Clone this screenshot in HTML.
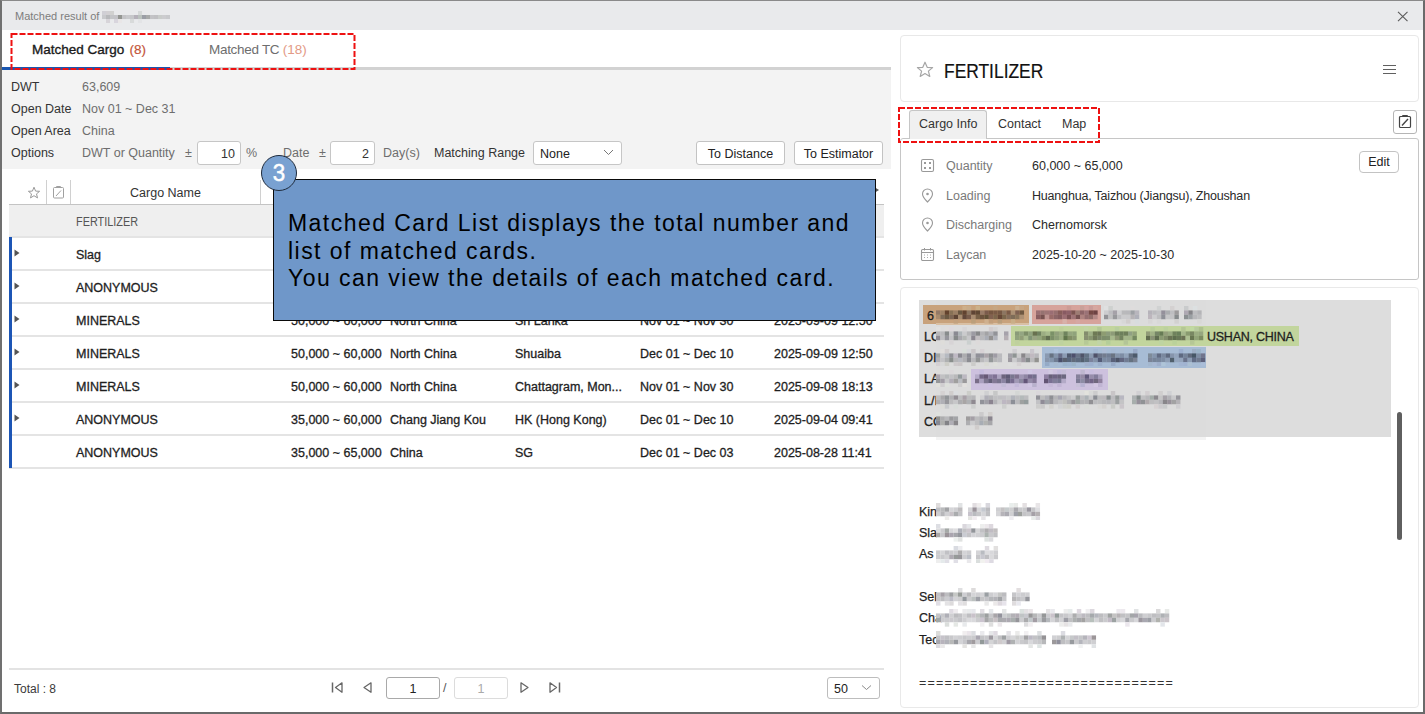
<!DOCTYPE html><html><head><meta charset="utf-8"><style>
*{box-sizing:border-box;margin:0;padding:0}
html,body{width:1425px;height:714px;overflow:hidden;background:#fff;font-family:"Liberation Sans",sans-serif;}
.a{position:absolute}
.t{position:absolute;white-space:nowrap;line-height:1}
.sb{-webkit-text-stroke:0.35px currentColor}
.inp{position:absolute;background:#fff;border:1px solid #c6c6c6;border-radius:3px}
.btn{position:absolute;background:#fff;border:1px solid #c3c3c3;border-radius:3px}
.rl{position:absolute;left:9px;width:875px;height:2px;margin-top:-1px;background:#e4e4e4}
.cell{position:absolute;white-space:nowrap;line-height:1;font-size:12.5px;color:#1e1e1e;-webkit-text-stroke:0.3px #1e1e1e}
.lab{position:absolute;white-space:nowrap;line-height:1;font-size:12.5px;color:#7a7a7a}
.val{position:absolute;white-space:nowrap;line-height:1;font-size:12.5px;color:#2a2a2a}
.em{position:absolute;white-space:nowrap;line-height:1;font-size:12.5px;color:#1e1e1e}
</style></head><body>
<div class="a" style="left:0;top:0;width:1425px;height:30px;background:#e9eaec"></div>
<div class="t" style="left:15px;top:11px;font-size:11px;color:#7d7d7d">Matched result of</div>
<svg class="a" style="left:102px;top:11.00px" width="68" height="12.0"><rect x="0.0" y="0.0" width="4.05" height="4.05" fill="rgb(208, 207, 213)"/><rect x="0.0" y="4.0" width="4.05" height="4.05" fill="rgb(200, 201, 204)"/><rect x="4.0" y="0.0" width="4.05" height="4.05" fill="rgb(210, 208, 211)"/><rect x="4.0" y="4.0" width="4.05" height="4.05" fill="rgb(184, 185, 188)"/><rect x="4.0" y="8.0" width="4.05" height="4.05" fill="rgb(215, 212, 217)"/><rect x="8.0" y="0.0" width="4.05" height="4.05" fill="rgb(209, 209, 208)"/><rect x="8.0" y="4.0" width="4.05" height="4.05" fill="rgb(196, 197, 200)"/><rect x="12.0" y="4.0" width="4.05" height="4.05" fill="rgb(196, 196, 200)"/><rect x="12.0" y="8.0" width="4.05" height="4.05" fill="rgb(216, 213, 221)"/><rect x="16.0" y="4.0" width="4.05" height="4.05" fill="rgb(148, 150, 146)"/><rect x="16.0" y="8.0" width="4.05" height="4.05" fill="rgb(233, 230, 231)"/><rect x="20.0" y="4.0" width="4.05" height="4.05" fill="rgb(196, 196, 199)"/><rect x="24.0" y="4.0" width="4.05" height="4.05" fill="rgb(201, 202, 205)"/><rect x="28.0" y="4.0" width="4.05" height="4.05" fill="rgb(198, 199, 202)"/><rect x="28.0" y="8.0" width="4.05" height="4.05" fill="rgb(216, 218, 218)"/><rect x="32.0" y="4.0" width="4.05" height="4.05" fill="rgb(181, 177, 186)"/><rect x="36.0" y="0.0" width="4.05" height="4.05" fill="rgb(213, 216, 216)"/><rect x="36.0" y="4.0" width="4.05" height="4.05" fill="rgb(187, 194, 190)"/><rect x="36.0" y="8.0" width="4.05" height="4.05" fill="rgb(227, 228, 230)"/><rect x="40.0" y="4.0" width="4.05" height="4.05" fill="rgb(155, 158, 166)"/><rect x="44.0" y="4.0" width="4.05" height="4.05" fill="rgb(168, 170, 170)"/><rect x="48.0" y="4.0" width="4.05" height="4.05" fill="rgb(195, 195, 198)"/><rect x="52.0" y="4.0" width="4.05" height="4.05" fill="rgb(192, 192, 195)"/><rect x="56.0" y="4.0" width="4.05" height="4.05" fill="rgb(201, 204, 202)"/><rect x="60.0" y="4.0" width="4.05" height="4.05" fill="rgb(204, 204, 207)"/><rect x="64.0" y="4.0" width="4.05" height="4.05" fill="rgb(200, 201, 204)"/></svg>
<svg class="a" style="left:1397px;top:11px" width="12" height="11" viewBox="0 0 12 11"><path d="M1 0.8L10.5 10.2M10.5 0.8L1 10.2" stroke="#5a5a5a" stroke-width="1.1" fill="none"/></svg>
<div class="a" style="left:2px;top:67px;width:889px;height:3px;background:#d2d2d2"></div>
<div class="a" style="left:2px;top:67px;width:168px;height:3px;background:#1a56b0"></div>
<div class="t sb" style="left:32px;top:43px;font-size:13.5px;color:#1a1a1a">Matched Cargo <span style="color:#c4553a;-webkit-text-stroke:0.2px #c4553a;margin-left:1.5px">(8)</span></div>
<div class="t" style="left:209px;top:43px;font-size:13.5px;color:#6e6e6e;letter-spacing:-0.3px">Matched TC <span style="color:#e39a86;letter-spacing:0">(18)</span></div>
<div class="a" style="left:2px;top:70px;width:889px;height:99px;background:#f3f3f3"></div>
<div class="t" style="left:11px;top:81px;font-size:12.5px;color:#333">DWT</div>
<div class="t" style="left:82px;top:81px;font-size:12.5px;color:#6e6e6e">63,609</div>
<div class="t" style="left:11px;top:103px;font-size:12.5px;color:#333">Open Date</div>
<div class="t" style="left:82px;top:103px;font-size:12.5px;color:#6e6e6e">Nov 01 ~ Dec 31</div>
<div class="t" style="left:11px;top:125px;font-size:12.5px;color:#333">Open Area</div>
<div class="t" style="left:82px;top:125px;font-size:12.5px;color:#6e6e6e">China</div>
<div class="t" style="left:11px;top:147px;font-size:12.5px;color:#333">Options</div>
<div class="t" style="left:82px;top:147px;font-size:12.5px;color:#6e6e6e">DWT or Quantity</div>
<div class="t" style="left:185px;top:147px;font-size:12.5px;color:#6e6e6e">±</div>
<div class="inp" style="left:197px;top:141px;width:44px;height:24px"></div>
<div class="t" style="left:197px;top:148px;width:38px;text-align:right;font-size:12.5px;color:#333">10</div>
<div class="t" style="left:246px;top:147px;font-size:12.5px;color:#6e6e6e">%</div>
<div class="t" style="left:283px;top:147px;font-size:12.5px;color:#6e6e6e">Date</div>
<div class="t" style="left:319px;top:147px;font-size:12.5px;color:#6e6e6e">±</div>
<div class="inp" style="left:330px;top:141px;width:45px;height:24px"></div>
<div class="t" style="left:330px;top:148px;width:39px;text-align:right;font-size:12.5px;color:#333">2</div>
<div class="t" style="left:383px;top:147px;font-size:12.5px;color:#6e6e6e">Day(s)</div>
<div class="t" style="left:434px;top:147px;font-size:12.5px;color:#333">Matching Range</div>
<div class="inp" style="left:533px;top:141px;width:89px;height:24px"></div>
<div class="t" style="left:540px;top:148px;font-size:12.5px;color:#222">None</div>
<svg class="a" style="left:603px;top:148px" width="11" height="8" viewBox="0 0 11 8"><path d="M1 2L5.5 6.5L10 2" stroke="#777" stroke-width="1" fill="none"/></svg>
<div class="btn" style="left:696px;top:141px;width:89px;height:24px"></div>
<div class="t" style="left:696px;top:148px;width:89px;text-align:center;font-size:12.5px;color:#222">To Distance</div>
<div class="btn" style="left:794px;top:141px;width:89px;height:24px"></div>
<div class="t" style="left:794px;top:148px;width:89px;text-align:center;font-size:12.5px;color:#222">To Estimator</div>
<div class="a" style="left:46px;top:180px;width:1px;height:24px;background:#d0d0d0"></div>
<div class="a" style="left:70px;top:180px;width:1px;height:24px;background:#d0d0d0"></div>
<div class="a" style="left:260px;top:180px;width:1px;height:24px;background:#d0d0d0"></div>
<div class="a" style="left:9px;top:204px;width:875px;height:1px;background:#c4c4c4"></div>
<svg class="a" style="left:27px;top:186px" width="14" height="14" viewBox="0 0 14 14"><path d="M7 1.2L8.6 5.1L12.6 5.3L9.5 7.9L10.5 11.9L7 9.7L3.5 11.9L4.5 7.9L1.4 5.3L5.4 5.1Z" stroke="#9a9a9a" stroke-width="1" fill="none" stroke-linejoin="round"/></svg>
<svg class="a" style="left:52px;top:185px" width="13" height="14" viewBox="0 0 13 14"><rect x="1.5" y="2.5" width="10" height="10.5" rx="1" stroke="#a0a0a0" stroke-width="1" fill="none"/><path d="M4.5 2.5V1.5H8.5V2.5" stroke="#a0a0a0" fill="none"/><path d="M4 11L9 5.5" stroke="#a0a0a0" stroke-width="1"/></svg>
<div class="t" style="left:71px;top:187px;width:189px;text-align:center;font-size:12.5px;color:#333">Cargo Name</div>
<div class="a" style="left:9px;top:205px;width:875px;height:32px;background:#efefef"></div>
<div class="t" style="left:76px;top:216px;font-size:12.5px;color:#555;transform:scaleX(0.87);transform-origin:0 0">FERTILIZER</div>
<div class="rl" style="top:237px"></div>
<svg class="a" style="left:14px;top:249px" width="6" height="8" viewBox="0 0 6 8"><path d="M0.5 0.5L5.5 4L0.5 7.5Z" fill="#555"/></svg>
<div class="cell" style="left:76px;top:249px">Slag</div>
<div class="rl" style="top:270px"></div>
<svg class="a" style="left:14px;top:282px" width="6" height="8" viewBox="0 0 6 8"><path d="M0.5 0.5L5.5 4L0.5 7.5Z" fill="#555"/></svg>
<div class="cell" style="left:76px;top:282px">ANONYMOUS</div>
<div class="rl" style="top:303px"></div>
<svg class="a" style="left:14px;top:315px" width="6" height="8" viewBox="0 0 6 8"><path d="M0.5 0.5L5.5 4L0.5 7.5Z" fill="#555"/></svg>
<div class="cell" style="left:76px;top:315px">MINERALS</div>
<div class="cell" style="left:291px;top:315px">50,000 ~ 60,000</div>
<div class="cell" style="left:390px;top:315px">North China</div>
<div class="cell" style="left:515px;top:315px">Sri Lanka</div>
<div class="cell" style="left:640px;top:315px">Nov 01 ~ Nov 30</div>
<div class="cell" style="left:774px;top:315px">2025-09-09 12:50</div>
<div class="rl" style="top:336px"></div>
<svg class="a" style="left:14px;top:348px" width="6" height="8" viewBox="0 0 6 8"><path d="M0.5 0.5L5.5 4L0.5 7.5Z" fill="#555"/></svg>
<div class="cell" style="left:76px;top:348px">MINERALS</div>
<div class="cell" style="left:291px;top:348px">50,000 ~ 60,000</div>
<div class="cell" style="left:390px;top:348px">North China</div>
<div class="cell" style="left:515px;top:348px">Shuaiba</div>
<div class="cell" style="left:640px;top:348px">Dec 01 ~ Dec 10</div>
<div class="cell" style="left:774px;top:348px">2025-09-09 12:50</div>
<div class="rl" style="top:369px"></div>
<svg class="a" style="left:14px;top:381px" width="6" height="8" viewBox="0 0 6 8"><path d="M0.5 0.5L5.5 4L0.5 7.5Z" fill="#555"/></svg>
<div class="cell" style="left:76px;top:381px">MINERALS</div>
<div class="cell" style="left:291px;top:381px">50,000 ~ 60,000</div>
<div class="cell" style="left:390px;top:381px">North China</div>
<div class="cell" style="left:515px;top:381px">Chattagram, Mon...</div>
<div class="cell" style="left:640px;top:381px">Nov 01 ~ Nov 30</div>
<div class="cell" style="left:774px;top:381px">2025-09-08 18:13</div>
<div class="rl" style="top:402px"></div>
<svg class="a" style="left:14px;top:414px" width="6" height="8" viewBox="0 0 6 8"><path d="M0.5 0.5L5.5 4L0.5 7.5Z" fill="#555"/></svg>
<div class="cell" style="left:76px;top:414px">ANONYMOUS</div>
<div class="cell" style="left:291px;top:414px">35,000 ~ 60,000</div>
<div class="cell" style="left:390px;top:414px">Chang Jiang Kou</div>
<div class="cell" style="left:515px;top:414px">HK (Hong Kong)</div>
<div class="cell" style="left:640px;top:414px">Dec 01 ~ Dec 10</div>
<div class="cell" style="left:774px;top:414px">2025-09-04 09:41</div>
<div class="rl" style="top:435px"></div>
<div class="cell" style="left:76px;top:447px">ANONYMOUS</div>
<div class="cell" style="left:291px;top:447px">35,000 ~ 65,000</div>
<div class="cell" style="left:390px;top:447px">China</div>
<div class="cell" style="left:515px;top:447px">SG</div>
<div class="cell" style="left:640px;top:447px">Dec 01 ~ Dec 03</div>
<div class="cell" style="left:774px;top:447px">2025-08-28 11:41</div>
<div class="rl" style="top:468px"></div>
<div class="a" style="left:9px;top:237px;width:3px;height:231px;background:#1c55b5"></div>
<div class="a" style="left:9px;top:668px;width:875px;height:2px;background:#e3e3e3"></div>
<div class="t" style="left:14px;top:683px;font-size:12px;color:#3a3a3a">Total : 8</div>
<svg class="a" style="left:330px;top:681px" width="14" height="13" viewBox="0 0 14 13"><path d="M2.5 1.5V11.5" stroke="#666" stroke-width="1.5"/><path d="M12 1.8L5.5 6.5L12 11.2Z" stroke="#666" stroke-width="1.3" fill="none" stroke-linejoin="round"/></svg>
<svg class="a" style="left:361px;top:681px" width="12" height="13" viewBox="0 0 12 13"><path d="M10 1.8L3 6.5L10 11.2Z" stroke="#666" stroke-width="1.3" fill="none" stroke-linejoin="round"/></svg>
<div class="inp" style="left:386px;top:677px;width:54px;height:22px;border-color:#a9a9a9"></div>
<div class="t" style="left:386px;top:683px;width:54px;text-align:center;font-size:12.5px;color:#222">1</div>
<div class="t" style="left:443px;top:682px;font-size:12.5px;color:#555">/</div>
<div class="inp" style="left:454px;top:677px;width:54px;height:22px;border-color:#dcdcdc"></div>
<div class="t" style="left:454px;top:683px;width:54px;text-align:center;font-size:12.5px;color:#aaa">1</div>
<svg class="a" style="left:519px;top:681px" width="12" height="13" viewBox="0 0 12 13"><path d="M2 1.8L9 6.5L2 11.2Z" stroke="#666" stroke-width="1.3" fill="none" stroke-linejoin="round"/></svg>
<svg class="a" style="left:548px;top:681px" width="14" height="13" viewBox="0 0 14 13"><path d="M11.5 1.5V11.5" stroke="#666" stroke-width="1.5"/><path d="M2 1.8L8.5 6.5L2 11.2Z" stroke="#666" stroke-width="1.3" fill="none" stroke-linejoin="round"/></svg>
<div class="inp" style="left:827px;top:677px;width:53px;height:22px;border-color:#bdbdbd"></div>
<div class="t" style="left:834px;top:683px;font-size:12.5px;color:#222">50</div>
<svg class="a" style="left:861px;top:684px" width="11" height="7" viewBox="0 0 11 7"><path d="M1 1.5L5.5 5.5L10 1.5" stroke="#8a8a8a" stroke-width="1" fill="none"/></svg>
<div class="a" style="left:900px;top:35px;width:519px;height:67px;border:1px solid #e8e8e8;border-radius:4px;background:#fff"></div>
<svg class="a" style="left:916px;top:61px" width="18" height="17" viewBox="0 0 18 17"><path d="M9 1.2L11.2 6.3L16.6 6.6L12.4 10.1L13.8 15.4L9 12.5L4.2 15.4L5.6 10.1L1.4 6.6L6.8 6.3Z" stroke="#a6a6a6" stroke-width="1.2" fill="none" stroke-linejoin="round"/></svg>
<div class="t" style="left:944px;top:61px;font-size:20px;color:#111;transform:scaleX(0.87);transform-origin:0 0;-webkit-text-stroke:0.2px #111">FERTILIZER</div>
<div class="a" style="left:1383px;top:65.2px;width:13px;height:1.3px;background:#606060"></div>
<div class="a" style="left:1383px;top:69.2px;width:13px;height:1.3px;background:#606060"></div>
<div class="a" style="left:1383px;top:73.2px;width:13px;height:1.3px;background:#606060"></div>
<div class="a" style="left:900px;top:138px;width:519px;height:142px;border:1px solid #c6c6c6;border-radius:3px;background:#fff"></div>
<div class="a" style="left:909px;top:110px;width:78px;height:29px;background:#f0f0f0;border:1px solid #c6c6c6;border-bottom:none;border-radius:3px 3px 0 0"></div>
<div class="t" style="left:919px;top:118px;font-size:12.5px;color:#333">Cargo Info</div>
<div class="t" style="left:998px;top:118px;font-size:12.5px;color:#333">Contact</div>
<div class="t" style="left:1062px;top:118px;font-size:12.5px;color:#333">Map</div>
<div class="btn" style="left:1393px;top:110px;width:24px;height:24px;border-color:#b5b5b5"></div>
<svg class="a" style="left:1398px;top:114px" width="14" height="15" viewBox="0 0 14 15"><rect x="1.5" y="2.5" width="11" height="11" rx="1" stroke="#444" stroke-width="1.2" fill="none"/><path d="M4.5 2.5V1.5H9.5V2.5" stroke="#444" fill="none"/><path d="M4 11.5L10 5" stroke="#444" stroke-width="1.4"/></svg>
<div class="btn" style="left:1359px;top:151px;width:40px;height:22px;border-color:#c3c3c3;border-radius:4px"></div>
<div class="t" style="left:1359px;top:156px;width:40px;text-align:center;font-size:12.5px;color:#222">Edit</div>
<div class="lab" style="left:946px;top:160px">Quantity</div>
<div class="val" style="left:1032px;top:160px">60,000 ~ 65,000</div>
<svg class="a" style="left:920px;top:158px" width="15" height="15" viewBox="0 0 15 15"><rect x="1.5" y="1.5" width="12" height="12" rx="1.5" stroke="#999" stroke-width="1.1" fill="none"/><rect x="4" y="4" width="2" height="2" fill="#999"/><rect x="9" y="4" width="2" height="2" fill="#999"/><rect x="4" y="9" width="2" height="2" fill="#999"/><rect x="9" y="9" width="2" height="2" fill="#999"/></svg>
<div class="lab" style="left:946px;top:190px">Loading</div>
<div class="val" style="left:1032px;top:190px;letter-spacing:-0.19px">Huanghua, Taizhou (Jiangsu), Zhoushan</div>
<svg class="a" style="left:920px;top:188px" width="15" height="15" viewBox="0 0 15 15"><path d="M7.5 14C7.5 14 2.5 9 2.5 6A5 5 0 0 1 12.5 6C12.5 9 7.5 14 7.5 14Z" stroke="#999" stroke-width="1.1" fill="none"/><circle cx="7.5" cy="6" r="1.3" fill="#999"/></svg>
<div class="lab" style="left:946px;top:219px">Discharging</div>
<div class="val" style="left:1032px;top:219px">Chernomorsk</div>
<svg class="a" style="left:920px;top:217px" width="15" height="15" viewBox="0 0 15 15"><path d="M7.5 14C7.5 14 2.5 9 2.5 6A5 5 0 0 1 12.5 6C12.5 9 7.5 14 7.5 14Z" stroke="#999" stroke-width="1.1" fill="none"/><circle cx="7.5" cy="6" r="1.3" fill="#999"/></svg>
<div class="lab" style="left:946px;top:249px">Laycan</div>
<div class="val" style="left:1032px;top:249px">2025-10-20 ~ 2025-10-30</div>
<svg class="a" style="left:920px;top:247px" width="15" height="15" viewBox="0 0 15 15"><rect x="1.5" y="2.5" width="12" height="11" rx="1.2" stroke="#999" stroke-width="1.1" fill="none"/><path d="M1.5 5.5H13.5" stroke="#999"/><path d="M4.5 1V3.5M10.5 1V3.5" stroke="#999"/><path d="M4 8h1M7 8h1M10 8h1M4 10.5h1M7 10.5h1M10 10.5h1" stroke="#aaa"/></svg>
<div class="a" style="left:900px;top:287px;width:519px;height:421px;border:1px solid #e9e9e9;border-radius:4px;background:#fff"></div>
<div class="a" style="left:919px;top:300px;width:472px;height:137px;background:#dddddd"></div>
<div class="a" style="left:923px;top:305px;width:106px;height:19px;background:#c8a27c"></div>
<div class="a" style="left:1032px;top:305px;width:69px;height:19px;background:#d6a39b"></div>
<div class="a" style="left:1011px;top:326px;width:288px;height:20px;background:#c2d59d"></div>
<div class="a" style="left:1042px;top:347px;width:164px;height:21px;background:#a7bcd5"></div>
<div class="a" style="left:971px;top:369px;width:137px;height:21px;background:#cdc1de"></div>
<div class="em" style="left:927px;top:309.8px;-webkit-text-stroke:0.3px #1e1e1e">6</div>
<div class="em" style="left:924px;top:331.0px;-webkit-text-stroke:0.3px #1e1e1e">LO</div>
<div class="em" style="left:924px;top:352.2px;-webkit-text-stroke:0.3px #1e1e1e">DI</div>
<div class="em" style="left:924px;top:373.4px;-webkit-text-stroke:0.3px #1e1e1e">LA</div>
<div class="em" style="left:924px;top:394.6px;-webkit-text-stroke:0.3px #1e1e1e">L/I</div>
<div class="em" style="left:924px;top:415.8px;-webkit-text-stroke:0.3px #1e1e1e">CO</div>
<div class="a" style="left:936px;top:300px;width:270px;height:137px;background:#dcdcdc"></div>
<div class="a" style="left:936px;top:437px;width:270px;height:3px;background:#f3f3f3"></div>
<div class="a" style="left:936px;top:305px;width:93px;height:19px;background:#c8a27c"></div>
<div class="a" style="left:936px;top:323px;width:93px;height:2px;background:#d9c0a4"></div>
<div class="a" style="left:1032px;top:305px;width:69px;height:19px;background:#d6a39b"></div>
<div class="a" style="left:1011px;top:326px;width:195px;height:20px;background:#c2d59d"></div>
<div class="a" style="left:1042px;top:347px;width:164px;height:21px;background:#a7bcd5"></div>
<div class="a" style="left:971px;top:369px;width:137px;height:21px;background:#cdc1de"></div>
<div class="em" style="left:1207px;top:331.0px;-webkit-text-stroke:0.3px #1e1e1e;letter-spacing:-0.25px">USHAN, CHINA</div>
<svg class="a" style="left:936px;top:306.20px" width="92" height="17.6"><rect x="0.0" y="4.4" width="4.45" height="4.45" fill="rgb(147, 122, 103)"/><rect x="0.0" y="8.8" width="4.45" height="4.45" fill="rgb(167, 139, 110)"/><rect x="4.4" y="4.4" width="4.45" height="4.45" fill="rgb(157, 129, 101)"/><rect x="4.4" y="8.8" width="4.45" height="4.45" fill="rgb(125, 106, 87)"/><rect x="8.8" y="4.4" width="4.45" height="4.45" fill="rgb(99, 67, 46)"/><rect x="8.8" y="8.8" width="4.45" height="4.45" fill="rgb(106, 88, 66)"/><rect x="13.2" y="4.4" width="4.45" height="4.45" fill="rgb(135, 113, 86)"/><rect x="13.2" y="8.8" width="4.45" height="4.45" fill="rgb(124, 101, 83)"/><rect x="17.6" y="4.4" width="4.45" height="4.45" fill="rgb(154, 127, 101)"/><rect x="17.6" y="8.8" width="4.45" height="4.45" fill="rgb(93, 68, 53)"/><rect x="17.6" y="13.2" width="4.45" height="4.45" fill="rgb(194, 161, 126)"/><rect x="22.0" y="4.4" width="4.45" height="4.45" fill="rgb(104, 86, 65)"/><rect x="22.0" y="8.8" width="4.45" height="4.45" fill="rgb(166, 139, 111)"/><rect x="26.4" y="0.0" width="4.45" height="4.45" fill="rgb(205, 175, 138)"/><rect x="26.4" y="4.4" width="4.45" height="4.45" fill="rgb(97, 67, 48)"/><rect x="26.4" y="8.8" width="4.45" height="4.45" fill="rgb(97, 72, 59)"/><rect x="30.8" y="0.0" width="4.45" height="4.45" fill="rgb(200, 172, 138)"/><rect x="30.8" y="4.4" width="4.45" height="4.45" fill="rgb(139, 118, 98)"/><rect x="30.8" y="8.8" width="4.45" height="4.45" fill="rgb(120, 92, 76)"/><rect x="35.2" y="4.4" width="4.45" height="4.45" fill="rgb(95, 69, 53)"/><rect x="35.2" y="8.8" width="4.45" height="4.45" fill="rgb(167, 140, 113)"/><rect x="35.2" y="13.2" width="4.45" height="4.45" fill="rgb(187, 159, 123)"/><rect x="39.6" y="0.0" width="4.45" height="4.45" fill="rgb(203, 177, 138)"/><rect x="39.6" y="4.4" width="4.45" height="4.45" fill="rgb(96, 73, 53)"/><rect x="39.6" y="8.8" width="4.45" height="4.45" fill="rgb(119, 96, 71)"/><rect x="44.0" y="4.4" width="4.45" height="4.45" fill="rgb(152, 123, 103)"/><rect x="44.0" y="8.8" width="4.45" height="4.45" fill="rgb(108, 83, 62)"/><rect x="48.4" y="4.4" width="4.45" height="4.45" fill="rgb(122, 91, 76)"/><rect x="48.4" y="8.8" width="4.45" height="4.45" fill="rgb(97, 80, 56)"/><rect x="48.4" y="13.2" width="4.45" height="4.45" fill="rgb(207, 176, 142)"/><rect x="52.8" y="4.4" width="4.45" height="4.45" fill="rgb(117, 86, 65)"/><rect x="52.8" y="8.8" width="4.45" height="4.45" fill="rgb(129, 97, 80)"/><rect x="52.8" y="13.2" width="4.45" height="4.45" fill="rgb(193, 158, 123)"/><rect x="57.2" y="0.0" width="4.45" height="4.45" fill="rgb(197, 166, 131)"/><rect x="57.2" y="4.4" width="4.45" height="4.45" fill="rgb(122, 91, 70)"/><rect x="57.2" y="8.8" width="4.45" height="4.45" fill="rgb(124, 102, 76)"/><rect x="61.6" y="4.4" width="4.45" height="4.45" fill="rgb(117, 88, 68)"/><rect x="61.6" y="8.8" width="4.45" height="4.45" fill="rgb(102, 71, 54)"/><rect x="61.6" y="13.2" width="4.45" height="4.45" fill="rgb(184, 157, 123)"/><rect x="66.0" y="4.4" width="4.45" height="4.45" fill="rgb(140, 118, 98)"/><rect x="66.0" y="8.8" width="4.45" height="4.45" fill="rgb(122, 102, 76)"/><rect x="70.4" y="4.4" width="4.45" height="4.45" fill="rgb(121, 90, 71)"/><rect x="70.4" y="8.8" width="4.45" height="4.45" fill="rgb(132, 110, 92)"/><rect x="74.8" y="4.4" width="4.45" height="4.45" fill="rgb(171, 144, 116)"/><rect x="74.8" y="8.8" width="4.45" height="4.45" fill="rgb(126, 108, 88)"/><rect x="74.8" y="13.2" width="4.45" height="4.45" fill="rgb(201, 174, 136)"/><rect x="79.2" y="0.0" width="4.45" height="4.45" fill="rgb(204, 177, 145)"/><rect x="79.2" y="4.4" width="4.45" height="4.45" fill="rgb(126, 97, 82)"/><rect x="79.2" y="8.8" width="4.45" height="4.45" fill="rgb(137, 117, 91)"/><rect x="83.6" y="0.0" width="4.45" height="4.45" fill="rgb(199, 167, 133)"/><rect x="83.6" y="4.4" width="4.45" height="4.45" fill="rgb(110, 88, 65)"/><rect x="83.6" y="8.8" width="4.45" height="4.45" fill="rgb(172, 144, 115)"/></svg>
<svg class="a" style="left:1036px;top:306.20px" width="64" height="17.6"><rect x="0.0" y="4.4" width="4.45" height="4.45" fill="rgb(153, 110, 114)"/><rect x="0.0" y="8.8" width="4.45" height="4.45" fill="rgb(136, 93, 96)"/><rect x="4.4" y="4.4" width="4.45" height="4.45" fill="rgb(150, 115, 113)"/><rect x="4.4" y="8.8" width="4.45" height="4.45" fill="rgb(119, 82, 80)"/><rect x="8.8" y="4.4" width="4.45" height="4.45" fill="rgb(158, 117, 117)"/><rect x="8.8" y="8.8" width="4.45" height="4.45" fill="rgb(191, 148, 145)"/><rect x="13.2" y="4.4" width="4.45" height="4.45" fill="rgb(154, 110, 116)"/><rect x="13.2" y="8.8" width="4.45" height="4.45" fill="rgb(153, 107, 105)"/><rect x="17.6" y="4.4" width="4.45" height="4.45" fill="rgb(150, 111, 111)"/><rect x="17.6" y="8.8" width="4.45" height="4.45" fill="rgb(140, 101, 103)"/><rect x="22.0" y="4.4" width="4.45" height="4.45" fill="rgb(135, 93, 90)"/><rect x="22.0" y="8.8" width="4.45" height="4.45" fill="rgb(132, 92, 95)"/><rect x="26.4" y="4.4" width="4.45" height="4.45" fill="rgb(136, 90, 98)"/><rect x="26.4" y="8.8" width="4.45" height="4.45" fill="rgb(155, 109, 115)"/><rect x="26.4" y="13.2" width="4.45" height="4.45" fill="rgb(216, 177, 170)"/><rect x="30.8" y="0.0" width="4.45" height="4.45" fill="rgb(204, 156, 149)"/><rect x="30.8" y="4.4" width="4.45" height="4.45" fill="rgb(142, 97, 105)"/><rect x="30.8" y="8.8" width="4.45" height="4.45" fill="rgb(124, 83, 86)"/><rect x="35.2" y="4.4" width="4.45" height="4.45" fill="rgb(123, 84, 81)"/><rect x="35.2" y="8.8" width="4.45" height="4.45" fill="rgb(158, 115, 119)"/><rect x="39.6" y="4.4" width="4.45" height="4.45" fill="rgb(156, 124, 116)"/><rect x="39.6" y="8.8" width="4.45" height="4.45" fill="rgb(118, 81, 81)"/><rect x="39.6" y="13.2" width="4.45" height="4.45" fill="rgb(213, 167, 163)"/><rect x="44.0" y="0.0" width="4.45" height="4.45" fill="rgb(201, 161, 154)"/><rect x="44.0" y="4.4" width="4.45" height="4.45" fill="rgb(142, 101, 104)"/><rect x="44.0" y="8.8" width="4.45" height="4.45" fill="rgb(174, 131, 128)"/><rect x="48.4" y="0.0" width="4.45" height="4.45" fill="rgb(213, 166, 162)"/><rect x="48.4" y="4.4" width="4.45" height="4.45" fill="rgb(154, 115, 119)"/><rect x="48.4" y="8.8" width="4.45" height="4.45" fill="rgb(149, 109, 111)"/><rect x="52.8" y="0.0" width="4.45" height="4.45" fill="rgb(202, 157, 154)"/><rect x="52.8" y="4.4" width="4.45" height="4.45" fill="rgb(117, 73, 69)"/><rect x="52.8" y="8.8" width="4.45" height="4.45" fill="rgb(144, 109, 106)"/><rect x="57.2" y="0.0" width="4.45" height="4.45" fill="rgb(213, 168, 161)"/><rect x="57.2" y="4.4" width="4.45" height="4.45" fill="rgb(109, 67, 67)"/><rect x="57.2" y="8.8" width="4.45" height="4.45" fill="rgb(179, 137, 134)"/></svg>
<svg class="a" style="left:1104px;top:306.20px" width="102" height="17.6"><rect x="0.0" y="0.0" width="4.45" height="4.45" fill="rgb(223, 224, 224)"/><rect x="0.0" y="4.4" width="4.45" height="4.45" fill="rgb(205, 205, 207)"/><rect x="0.0" y="8.8" width="4.45" height="4.45" fill="rgb(147, 147, 151)"/><rect x="4.4" y="0.0" width="4.45" height="4.45" fill="rgb(206, 209, 207)"/><rect x="4.4" y="4.4" width="4.45" height="4.45" fill="rgb(189, 189, 192)"/><rect x="4.4" y="8.8" width="4.45" height="4.45" fill="rgb(192, 192, 193)"/><rect x="8.8" y="4.4" width="4.45" height="4.45" fill="rgb(165, 161, 168)"/><rect x="8.8" y="8.8" width="4.45" height="4.45" fill="rgb(152, 153, 156)"/><rect x="13.2" y="4.4" width="4.45" height="4.45" fill="rgb(207, 207, 209)"/><rect x="13.2" y="8.8" width="4.45" height="4.45" fill="rgb(190, 190, 193)"/><rect x="17.6" y="4.4" width="4.45" height="4.45" fill="rgb(185, 185, 187)"/><rect x="17.6" y="8.8" width="4.45" height="4.45" fill="rgb(203, 203, 205)"/><rect x="17.6" y="13.2" width="4.45" height="4.45" fill="rgb(215, 215, 215)"/><rect x="22.0" y="4.4" width="4.45" height="4.45" fill="rgb(184, 184, 187)"/><rect x="22.0" y="8.8" width="4.45" height="4.45" fill="rgb(202, 202, 204)"/><rect x="22.0" y="13.2" width="4.45" height="4.45" fill="rgb(208, 205, 204)"/><rect x="26.4" y="0.0" width="4.45" height="4.45" fill="rgb(222, 220, 220)"/><rect x="26.4" y="4.4" width="4.45" height="4.45" fill="rgb(158, 161, 165)"/><rect x="26.4" y="8.8" width="4.45" height="4.45" fill="rgb(182, 179, 182)"/><rect x="30.8" y="4.4" width="4.45" height="4.45" fill="rgb(184, 182, 189)"/><rect x="30.8" y="8.8" width="4.45" height="4.45" fill="rgb(175, 176, 185)"/><rect x="30.8" y="13.2" width="4.45" height="4.45" fill="rgb(216, 220, 221)"/><rect x="44.0" y="4.4" width="4.45" height="4.45" fill="rgb(182, 179, 186)"/><rect x="44.0" y="8.8" width="4.45" height="4.45" fill="rgb(189, 182, 189)"/><rect x="44.0" y="13.2" width="4.45" height="4.45" fill="rgb(215, 214, 214)"/><rect x="48.4" y="4.4" width="4.45" height="4.45" fill="rgb(187, 187, 190)"/><rect x="48.4" y="8.8" width="4.45" height="4.45" fill="rgb(205, 205, 207)"/><rect x="52.8" y="0.0" width="4.45" height="4.45" fill="rgb(208, 210, 210)"/><rect x="52.8" y="4.4" width="4.45" height="4.45" fill="rgb(194, 194, 197)"/><rect x="52.8" y="8.8" width="4.45" height="4.45" fill="rgb(190, 190, 192)"/><rect x="52.8" y="13.2" width="4.45" height="4.45" fill="rgb(216, 216, 216)"/><rect x="57.2" y="4.4" width="4.45" height="4.45" fill="rgb(148, 144, 155)"/><rect x="57.2" y="8.8" width="4.45" height="4.45" fill="rgb(143, 145, 152)"/><rect x="61.6" y="4.4" width="4.45" height="4.45" fill="rgb(171, 173, 176)"/><rect x="61.6" y="8.8" width="4.45" height="4.45" fill="rgb(198, 198, 200)"/><rect x="66.0" y="0.0" width="4.45" height="4.45" fill="rgb(212, 209, 209)"/><rect x="66.0" y="4.4" width="4.45" height="4.45" fill="rgb(190, 190, 193)"/><rect x="66.0" y="8.8" width="4.45" height="4.45" fill="rgb(195, 195, 197)"/><rect x="70.4" y="4.4" width="4.45" height="4.45" fill="rgb(157, 155, 156)"/><rect x="70.4" y="8.8" width="4.45" height="4.45" fill="rgb(135, 139, 141)"/><rect x="70.4" y="13.2" width="4.45" height="4.45" fill="rgb(210, 209, 208)"/><rect x="80.0" y="0.0" width="4.45" height="4.45" fill="rgb(201, 203, 204)"/><rect x="80.0" y="4.4" width="4.45" height="4.45" fill="rgb(174, 168, 178)"/><rect x="80.0" y="8.8" width="4.45" height="4.45" fill="rgb(139, 144, 146)"/><rect x="84.4" y="4.4" width="4.45" height="4.45" fill="rgb(134, 133, 137)"/><rect x="84.4" y="8.8" width="4.45" height="4.45" fill="rgb(155, 159, 163)"/><rect x="88.8" y="0.0" width="4.45" height="4.45" fill="rgb(220, 224, 225)"/><rect x="88.8" y="4.4" width="4.45" height="4.45" fill="rgb(190, 190, 193)"/><rect x="88.8" y="8.8" width="4.45" height="4.45" fill="rgb(184, 184, 187)"/><rect x="93.2" y="4.4" width="4.45" height="4.45" fill="rgb(180, 180, 183)"/><rect x="93.2" y="8.8" width="4.45" height="4.45" fill="rgb(190, 190, 192)"/><rect x="93.2" y="13.2" width="4.45" height="4.45" fill="rgb(216, 216, 214)"/></svg>
<svg class="a" style="left:936px;top:327.40px" width="76" height="17.6"><rect x="0.0" y="0.0" width="4.45" height="4.45" fill="rgb(225, 224, 223)"/><rect x="0.0" y="4.4" width="4.45" height="4.45" fill="rgb(183, 183, 186)"/><rect x="0.0" y="8.8" width="4.45" height="4.45" fill="rgb(142, 139, 147)"/><rect x="4.4" y="4.4" width="4.45" height="4.45" fill="rgb(187, 187, 189)"/><rect x="4.4" y="8.8" width="4.45" height="4.45" fill="rgb(192, 192, 195)"/><rect x="4.4" y="13.2" width="4.45" height="4.45" fill="rgb(222, 221, 218)"/><rect x="8.8" y="0.0" width="4.45" height="4.45" fill="rgb(223, 220, 219)"/><rect x="8.8" y="4.4" width="4.45" height="4.45" fill="rgb(136, 140, 140)"/><rect x="8.8" y="8.8" width="4.45" height="4.45" fill="rgb(150, 150, 156)"/><rect x="13.2" y="0.0" width="4.45" height="4.45" fill="rgb(222, 217, 221)"/><rect x="13.2" y="4.4" width="4.45" height="4.45" fill="rgb(202, 202, 204)"/><rect x="13.2" y="8.8" width="4.45" height="4.45" fill="rgb(194, 194, 197)"/><rect x="13.2" y="13.2" width="4.45" height="4.45" fill="rgb(215, 212, 214)"/><rect x="17.6" y="4.4" width="4.45" height="4.45" fill="rgb(138, 138, 146)"/><rect x="17.6" y="8.8" width="4.45" height="4.45" fill="rgb(134, 138, 138)"/><rect x="22.0" y="4.4" width="4.45" height="4.45" fill="rgb(176, 182, 185)"/><rect x="22.0" y="8.8" width="4.45" height="4.45" fill="rgb(169, 168, 173)"/><rect x="26.4" y="0.0" width="4.45" height="4.45" fill="rgb(215, 213, 215)"/><rect x="26.4" y="4.4" width="4.45" height="4.45" fill="rgb(203, 203, 205)"/><rect x="26.4" y="8.8" width="4.45" height="4.45" fill="rgb(180, 183, 181)"/><rect x="30.8" y="4.4" width="4.45" height="4.45" fill="rgb(183, 183, 185)"/><rect x="30.8" y="8.8" width="4.45" height="4.45" fill="rgb(199, 199, 201)"/><rect x="30.8" y="13.2" width="4.45" height="4.45" fill="rgb(203, 208, 207)"/><rect x="35.2" y="4.4" width="4.45" height="4.45" fill="rgb(156, 155, 163)"/><rect x="35.2" y="8.8" width="4.45" height="4.45" fill="rgb(139, 135, 144)"/><rect x="39.6" y="4.4" width="4.45" height="4.45" fill="rgb(135, 136, 138)"/><rect x="39.6" y="8.8" width="4.45" height="4.45" fill="rgb(194, 190, 193)"/><rect x="39.6" y="13.2" width="4.45" height="4.45" fill="rgb(221, 218, 218)"/><rect x="44.0" y="4.4" width="4.45" height="4.45" fill="rgb(179, 179, 182)"/><rect x="44.0" y="8.8" width="4.45" height="4.45" fill="rgb(184, 184, 187)"/><rect x="48.4" y="4.4" width="4.45" height="4.45" fill="rgb(163, 163, 165)"/><rect x="48.4" y="8.8" width="4.45" height="4.45" fill="rgb(170, 173, 181)"/><rect x="52.8" y="0.0" width="4.45" height="4.45" fill="rgb(211, 205, 206)"/><rect x="52.8" y="4.4" width="4.45" height="4.45" fill="rgb(177, 178, 184)"/><rect x="52.8" y="8.8" width="4.45" height="4.45" fill="rgb(147, 145, 144)"/><rect x="57.2" y="0.0" width="4.45" height="4.45" fill="rgb(212, 211, 211)"/><rect x="57.2" y="4.4" width="4.45" height="4.45" fill="rgb(146, 147, 152)"/><rect x="57.2" y="8.8" width="4.45" height="4.45" fill="rgb(176, 178, 186)"/><rect x="68.0" y="4.4" width="4.45" height="4.45" fill="rgb(166, 162, 171)"/><rect x="68.0" y="8.8" width="4.45" height="4.45" fill="rgb(182, 175, 180)"/></svg>
<svg class="a" style="left:1015px;top:327.40px" width="191" height="17.6"><rect x="0.0" y="4.4" width="4.45" height="4.45" fill="rgb(138, 155, 121)"/><rect x="0.0" y="8.8" width="4.45" height="4.45" fill="rgb(144, 162, 125)"/><rect x="0.0" y="13.2" width="4.45" height="4.45" fill="rgb(191, 208, 158)"/><rect x="4.4" y="4.4" width="4.45" height="4.45" fill="rgb(148, 165, 130)"/><rect x="4.4" y="8.8" width="4.45" height="4.45" fill="rgb(145, 158, 120)"/><rect x="8.8" y="4.4" width="4.45" height="4.45" fill="rgb(125, 142, 105)"/><rect x="8.8" y="8.8" width="4.45" height="4.45" fill="rgb(168, 186, 143)"/><rect x="13.2" y="4.4" width="4.45" height="4.45" fill="rgb(144, 162, 126)"/><rect x="13.2" y="8.8" width="4.45" height="4.45" fill="rgb(130, 149, 118)"/><rect x="17.6" y="4.4" width="4.45" height="4.45" fill="rgb(104, 113, 79)"/><rect x="17.6" y="8.8" width="4.45" height="4.45" fill="rgb(152, 163, 130)"/><rect x="22.0" y="0.0" width="4.45" height="4.45" fill="rgb(193, 211, 159)"/><rect x="22.0" y="4.4" width="4.45" height="4.45" fill="rgb(112, 130, 96)"/><rect x="22.0" y="8.8" width="4.45" height="4.45" fill="rgb(147, 164, 124)"/><rect x="26.4" y="4.4" width="4.45" height="4.45" fill="rgb(156, 173, 131)"/><rect x="26.4" y="8.8" width="4.45" height="4.45" fill="rgb(128, 143, 102)"/><rect x="30.8" y="4.4" width="4.45" height="4.45" fill="rgb(167, 186, 141)"/><rect x="30.8" y="8.8" width="4.45" height="4.45" fill="rgb(98, 111, 81)"/><rect x="35.2" y="4.4" width="4.45" height="4.45" fill="rgb(123, 145, 104)"/><rect x="35.2" y="8.8" width="4.45" height="4.45" fill="rgb(123, 142, 104)"/><rect x="39.6" y="4.4" width="4.45" height="4.45" fill="rgb(145, 160, 124)"/><rect x="39.6" y="8.8" width="4.45" height="4.45" fill="rgb(140, 158, 120)"/><rect x="44.0" y="0.0" width="4.45" height="4.45" fill="rgb(191, 208, 155)"/><rect x="44.0" y="4.4" width="4.45" height="4.45" fill="rgb(155, 172, 130)"/><rect x="44.0" y="8.8" width="4.45" height="4.45" fill="rgb(156, 174, 130)"/><rect x="44.0" y="13.2" width="4.45" height="4.45" fill="rgb(190, 210, 159)"/><rect x="48.4" y="4.4" width="4.45" height="4.45" fill="rgb(111, 131, 94)"/><rect x="48.4" y="8.8" width="4.45" height="4.45" fill="rgb(96, 117, 75)"/><rect x="52.8" y="4.4" width="4.45" height="4.45" fill="rgb(148, 166, 127)"/><rect x="52.8" y="8.8" width="4.45" height="4.45" fill="rgb(128, 142, 101)"/><rect x="57.2" y="4.4" width="4.45" height="4.45" fill="rgb(143, 163, 123)"/><rect x="57.2" y="8.8" width="4.45" height="4.45" fill="rgb(136, 151, 113)"/><rect x="69.0" y="0.0" width="4.45" height="4.45" fill="rgb(194, 213, 164)"/><rect x="69.0" y="4.4" width="4.45" height="4.45" fill="rgb(131, 141, 109)"/><rect x="69.0" y="8.8" width="4.45" height="4.45" fill="rgb(135, 144, 113)"/><rect x="69.0" y="13.2" width="4.45" height="4.45" fill="rgb(182, 201, 150)"/><rect x="73.4" y="4.4" width="4.45" height="4.45" fill="rgb(158, 175, 134)"/><rect x="73.4" y="8.8" width="4.45" height="4.45" fill="rgb(136, 150, 113)"/><rect x="77.8" y="4.4" width="4.45" height="4.45" fill="rgb(110, 122, 85)"/><rect x="77.8" y="8.8" width="4.45" height="4.45" fill="rgb(111, 122, 90)"/><rect x="82.2" y="0.0" width="4.45" height="4.45" fill="rgb(180, 200, 150)"/><rect x="82.2" y="4.4" width="4.45" height="4.45" fill="rgb(107, 117, 87)"/><rect x="82.2" y="8.8" width="4.45" height="4.45" fill="rgb(122, 134, 106)"/><rect x="82.2" y="13.2" width="4.45" height="4.45" fill="rgb(193, 212, 167)"/><rect x="86.6" y="4.4" width="4.45" height="4.45" fill="rgb(141, 156, 114)"/><rect x="86.6" y="8.8" width="4.45" height="4.45" fill="rgb(124, 141, 107)"/><rect x="91.0" y="4.4" width="4.45" height="4.45" fill="rgb(140, 156, 124)"/><rect x="91.0" y="8.8" width="4.45" height="4.45" fill="rgb(126, 143, 109)"/><rect x="91.0" y="13.2" width="4.45" height="4.45" fill="rgb(180, 205, 153)"/><rect x="95.4" y="4.4" width="4.45" height="4.45" fill="rgb(141, 155, 120)"/><rect x="95.4" y="8.8" width="4.45" height="4.45" fill="rgb(167, 185, 141)"/><rect x="99.8" y="0.0" width="4.45" height="4.45" fill="rgb(185, 207, 160)"/><rect x="99.8" y="4.4" width="4.45" height="4.45" fill="rgb(110, 127, 92)"/><rect x="99.8" y="8.8" width="4.45" height="4.45" fill="rgb(141, 151, 115)"/><rect x="104.2" y="4.4" width="4.45" height="4.45" fill="rgb(109, 127, 92)"/><rect x="104.2" y="8.8" width="4.45" height="4.45" fill="rgb(115, 131, 95)"/><rect x="108.6" y="4.4" width="4.45" height="4.45" fill="rgb(110, 126, 90)"/><rect x="108.6" y="8.8" width="4.45" height="4.45" fill="rgb(163, 181, 138)"/><rect x="108.6" y="13.2" width="4.45" height="4.45" fill="rgb(179, 197, 151)"/><rect x="113.0" y="4.4" width="4.45" height="4.45" fill="rgb(144, 160, 131)"/><rect x="113.0" y="8.8" width="4.45" height="4.45" fill="rgb(162, 180, 136)"/><rect x="117.4" y="4.4" width="4.45" height="4.45" fill="rgb(145, 162, 121)"/><rect x="117.4" y="8.8" width="4.45" height="4.45" fill="rgb(116, 137, 97)"/><rect x="131.0" y="4.4" width="4.45" height="4.45" fill="rgb(145, 156, 120)"/><rect x="131.0" y="8.8" width="4.45" height="4.45" fill="rgb(97, 109, 79)"/><rect x="135.4" y="0.0" width="4.45" height="4.45" fill="rgb(185, 206, 155)"/><rect x="135.4" y="4.4" width="4.45" height="4.45" fill="rgb(161, 178, 135)"/><rect x="135.4" y="8.8" width="4.45" height="4.45" fill="rgb(137, 146, 118)"/><rect x="139.8" y="4.4" width="4.45" height="4.45" fill="rgb(118, 134, 103)"/><rect x="139.8" y="8.8" width="4.45" height="4.45" fill="rgb(95, 109, 80)"/><rect x="144.2" y="4.4" width="4.45" height="4.45" fill="rgb(103, 123, 85)"/><rect x="144.2" y="8.8" width="4.45" height="4.45" fill="rgb(138, 154, 114)"/><rect x="144.2" y="13.2" width="4.45" height="4.45" fill="rgb(190, 212, 162)"/><rect x="148.6" y="0.0" width="4.45" height="4.45" fill="rgb(188, 209, 158)"/><rect x="148.6" y="4.4" width="4.45" height="4.45" fill="rgb(148, 159, 123)"/><rect x="148.6" y="8.8" width="4.45" height="4.45" fill="rgb(129, 141, 106)"/><rect x="153.0" y="4.4" width="4.45" height="4.45" fill="rgb(153, 170, 129)"/><rect x="153.0" y="8.8" width="4.45" height="4.45" fill="rgb(106, 115, 84)"/><rect x="157.4" y="4.4" width="4.45" height="4.45" fill="rgb(112, 130, 93)"/><rect x="157.4" y="8.8" width="4.45" height="4.45" fill="rgb(94, 110, 78)"/><rect x="157.4" y="13.2" width="4.45" height="4.45" fill="rgb(186, 209, 154)"/><rect x="161.8" y="4.4" width="4.45" height="4.45" fill="rgb(105, 127, 90)"/><rect x="161.8" y="8.8" width="4.45" height="4.45" fill="rgb(104, 119, 87)"/><rect x="166.2" y="0.0" width="4.45" height="4.45" fill="rgb(180, 198, 149)"/><rect x="166.2" y="4.4" width="4.45" height="4.45" fill="rgb(165, 183, 140)"/><rect x="166.2" y="8.8" width="4.45" height="4.45" fill="rgb(107, 114, 84)"/><rect x="170.6" y="4.4" width="4.45" height="4.45" fill="rgb(137, 155, 112)"/><rect x="170.6" y="8.8" width="4.45" height="4.45" fill="rgb(173, 191, 146)"/><rect x="175.0" y="0.0" width="4.45" height="4.45" fill="rgb(192, 217, 162)"/><rect x="175.0" y="4.4" width="4.45" height="4.45" fill="rgb(121, 135, 99)"/><rect x="175.0" y="8.8" width="4.45" height="4.45" fill="rgb(104, 118, 81)"/><rect x="175.0" y="13.2" width="4.45" height="4.45" fill="rgb(181, 199, 150)"/><rect x="179.4" y="0.0" width="4.45" height="4.45" fill="rgb(184, 203, 159)"/><rect x="179.4" y="4.4" width="4.45" height="4.45" fill="rgb(155, 173, 130)"/><rect x="179.4" y="8.8" width="4.45" height="4.45" fill="rgb(145, 163, 120)"/><rect x="183.8" y="0.0" width="4.45" height="4.45" fill="rgb(173, 192, 142)"/><rect x="183.8" y="4.4" width="4.45" height="4.45" fill="rgb(150, 166, 127)"/><rect x="183.8" y="8.8" width="4.45" height="4.45" fill="rgb(124, 140, 97)"/></svg>
<svg class="a" style="left:936px;top:348.60px" width="104" height="17.6"><rect x="0.0" y="4.4" width="4.45" height="4.45" fill="rgb(160, 164, 162)"/><rect x="0.0" y="8.8" width="4.45" height="4.45" fill="rgb(177, 176, 181)"/><rect x="0.0" y="13.2" width="4.45" height="4.45" fill="rgb(212, 208, 211)"/><rect x="4.4" y="0.0" width="4.45" height="4.45" fill="rgb(224, 222, 220)"/><rect x="4.4" y="4.4" width="4.45" height="4.45" fill="rgb(203, 203, 205)"/><rect x="4.4" y="8.8" width="4.45" height="4.45" fill="rgb(195, 195, 198)"/><rect x="4.4" y="13.2" width="4.45" height="4.45" fill="rgb(215, 216, 216)"/><rect x="8.8" y="0.0" width="4.45" height="4.45" fill="rgb(210, 206, 206)"/><rect x="8.8" y="4.4" width="4.45" height="4.45" fill="rgb(182, 186, 193)"/><rect x="8.8" y="8.8" width="4.45" height="4.45" fill="rgb(174, 176, 177)"/><rect x="8.8" y="13.2" width="4.45" height="4.45" fill="rgb(205, 205, 199)"/><rect x="13.2" y="4.4" width="4.45" height="4.45" fill="rgb(144, 144, 150)"/><rect x="13.2" y="8.8" width="4.45" height="4.45" fill="rgb(137, 142, 140)"/><rect x="17.6" y="4.4" width="4.45" height="4.45" fill="rgb(191, 185, 196)"/><rect x="17.6" y="8.8" width="4.45" height="4.45" fill="rgb(182, 182, 184)"/><rect x="17.6" y="13.2" width="4.45" height="4.45" fill="rgb(206, 202, 204)"/><rect x="22.0" y="4.4" width="4.45" height="4.45" fill="rgb(139, 138, 145)"/><rect x="22.0" y="8.8" width="4.45" height="4.45" fill="rgb(184, 186, 193)"/><rect x="22.0" y="13.2" width="4.45" height="4.45" fill="rgb(203, 199, 200)"/><rect x="26.4" y="0.0" width="4.45" height="4.45" fill="rgb(217, 223, 217)"/><rect x="26.4" y="4.4" width="4.45" height="4.45" fill="rgb(172, 172, 175)"/><rect x="26.4" y="8.8" width="4.45" height="4.45" fill="rgb(176, 176, 179)"/><rect x="30.8" y="0.0" width="4.45" height="4.45" fill="rgb(215, 216, 219)"/><rect x="30.8" y="4.4" width="4.45" height="4.45" fill="rgb(139, 140, 147)"/><rect x="30.8" y="8.8" width="4.45" height="4.45" fill="rgb(139, 140, 145)"/><rect x="35.2" y="0.0" width="4.45" height="4.45" fill="rgb(202, 198, 200)"/><rect x="35.2" y="4.4" width="4.45" height="4.45" fill="rgb(198, 198, 200)"/><rect x="35.2" y="8.8" width="4.45" height="4.45" fill="rgb(184, 184, 187)"/><rect x="35.2" y="13.2" width="4.45" height="4.45" fill="rgb(203, 203, 201)"/><rect x="39.6" y="4.4" width="4.45" height="4.45" fill="rgb(145, 145, 152)"/><rect x="39.6" y="8.8" width="4.45" height="4.45" fill="rgb(147, 149, 149)"/><rect x="44.0" y="0.0" width="4.45" height="4.45" fill="rgb(216, 210, 213)"/><rect x="44.0" y="4.4" width="4.45" height="4.45" fill="rgb(150, 150, 158)"/><rect x="44.0" y="8.8" width="4.45" height="4.45" fill="rgb(186, 186, 188)"/><rect x="48.4" y="4.4" width="4.45" height="4.45" fill="rgb(170, 163, 168)"/><rect x="48.4" y="8.8" width="4.45" height="4.45" fill="rgb(198, 198, 200)"/><rect x="48.4" y="13.2" width="4.45" height="4.45" fill="rgb(217, 218, 212)"/><rect x="52.8" y="4.4" width="4.45" height="4.45" fill="rgb(142, 143, 146)"/><rect x="52.8" y="8.8" width="4.45" height="4.45" fill="rgb(148, 152, 153)"/><rect x="57.2" y="4.4" width="4.45" height="4.45" fill="rgb(159, 156, 165)"/><rect x="57.2" y="8.8" width="4.45" height="4.45" fill="rgb(182, 182, 184)"/><rect x="57.2" y="13.2" width="4.45" height="4.45" fill="rgb(222, 223, 219)"/><rect x="61.6" y="0.0" width="4.45" height="4.45" fill="rgb(223, 221, 222)"/><rect x="61.6" y="4.4" width="4.45" height="4.45" fill="rgb(187, 187, 190)"/><rect x="61.6" y="8.8" width="4.45" height="4.45" fill="rgb(186, 186, 190)"/><rect x="72.0" y="4.4" width="4.45" height="4.45" fill="rgb(162, 161, 168)"/><rect x="72.0" y="8.8" width="4.45" height="4.45" fill="rgb(158, 155, 161)"/><rect x="72.0" y="13.2" width="4.45" height="4.45" fill="rgb(221, 222, 221)"/><rect x="76.4" y="0.0" width="4.45" height="4.45" fill="rgb(206, 205, 208)"/><rect x="76.4" y="4.4" width="4.45" height="4.45" fill="rgb(143, 149, 148)"/><rect x="76.4" y="8.8" width="4.45" height="4.45" fill="rgb(204, 204, 206)"/><rect x="80.8" y="4.4" width="4.45" height="4.45" fill="rgb(202, 202, 203)"/><rect x="80.8" y="8.8" width="4.45" height="4.45" fill="rgb(180, 180, 183)"/><rect x="80.8" y="13.2" width="4.45" height="4.45" fill="rgb(213, 210, 211)"/><rect x="85.2" y="4.4" width="4.45" height="4.45" fill="rgb(137, 135, 138)"/><rect x="85.2" y="8.8" width="4.45" height="4.45" fill="rgb(161, 155, 163)"/><rect x="89.6" y="4.4" width="4.45" height="4.45" fill="rgb(180, 180, 183)"/><rect x="89.6" y="8.8" width="4.45" height="4.45" fill="rgb(134, 138, 140)"/><rect x="94.0" y="0.0" width="4.45" height="4.45" fill="rgb(201, 198, 204)"/><rect x="94.0" y="4.4" width="4.45" height="4.45" fill="rgb(192, 185, 192)"/><rect x="94.0" y="8.8" width="4.45" height="4.45" fill="rgb(186, 186, 188)"/><rect x="98.4" y="0.0" width="4.45" height="4.45" fill="rgb(217, 219, 220)"/><rect x="98.4" y="4.4" width="4.45" height="4.45" fill="rgb(183, 183, 187)"/><rect x="98.4" y="8.8" width="4.45" height="4.45" fill="rgb(146, 146, 143)"/></svg>
<svg class="a" style="left:1045px;top:348.60px" width="161" height="17.6"><rect x="0.0" y="4.4" width="4.45" height="4.45" fill="rgb(138, 154, 177)"/><rect x="0.0" y="8.8" width="4.45" height="4.45" fill="rgb(135, 149, 171)"/><rect x="0.0" y="13.2" width="4.45" height="4.45" fill="rgb(148, 170, 198)"/><rect x="4.4" y="4.4" width="4.45" height="4.45" fill="rgb(103, 114, 130)"/><rect x="4.4" y="8.8" width="4.45" height="4.45" fill="rgb(132, 149, 172)"/><rect x="8.8" y="0.0" width="4.45" height="4.45" fill="rgb(173, 193, 220)"/><rect x="8.8" y="4.4" width="4.45" height="4.45" fill="rgb(132, 148, 171)"/><rect x="8.8" y="8.8" width="4.45" height="4.45" fill="rgb(112, 125, 147)"/><rect x="8.8" y="13.2" width="4.45" height="4.45" fill="rgb(167, 186, 208)"/><rect x="13.2" y="4.4" width="4.45" height="4.45" fill="rgb(103, 108, 134)"/><rect x="13.2" y="8.8" width="4.45" height="4.45" fill="rgb(74, 79, 106)"/><rect x="17.6" y="4.4" width="4.45" height="4.45" fill="rgb(139, 155, 179)"/><rect x="17.6" y="8.8" width="4.45" height="4.45" fill="rgb(89, 96, 111)"/><rect x="17.6" y="13.2" width="4.45" height="4.45" fill="rgb(156, 180, 204)"/><rect x="22.0" y="4.4" width="4.45" height="4.45" fill="rgb(78, 88, 109)"/><rect x="22.0" y="8.8" width="4.45" height="4.45" fill="rgb(88, 101, 122)"/><rect x="22.0" y="13.2" width="4.45" height="4.45" fill="rgb(158, 181, 208)"/><rect x="26.4" y="0.0" width="4.45" height="4.45" fill="rgb(167, 192, 213)"/><rect x="26.4" y="4.4" width="4.45" height="4.45" fill="rgb(77, 80, 108)"/><rect x="26.4" y="8.8" width="4.45" height="4.45" fill="rgb(98, 107, 123)"/><rect x="26.4" y="13.2" width="4.45" height="4.45" fill="rgb(156, 180, 200)"/><rect x="30.8" y="4.4" width="4.45" height="4.45" fill="rgb(104, 115, 135)"/><rect x="30.8" y="8.8" width="4.45" height="4.45" fill="rgb(93, 106, 126)"/><rect x="35.2" y="4.4" width="4.45" height="4.45" fill="rgb(79, 84, 104)"/><rect x="35.2" y="8.8" width="4.45" height="4.45" fill="rgb(84, 96, 112)"/><rect x="39.6" y="4.4" width="4.45" height="4.45" fill="rgb(100, 115, 133)"/><rect x="39.6" y="8.8" width="4.45" height="4.45" fill="rgb(95, 111, 127)"/><rect x="39.6" y="13.2" width="4.45" height="4.45" fill="rgb(163, 178, 204)"/><rect x="44.0" y="4.4" width="4.45" height="4.45" fill="rgb(138, 153, 175)"/><rect x="44.0" y="8.8" width="4.45" height="4.45" fill="rgb(124, 131, 157)"/><rect x="44.0" y="13.2" width="4.45" height="4.45" fill="rgb(159, 178, 208)"/><rect x="48.4" y="0.0" width="4.45" height="4.45" fill="rgb(162, 183, 209)"/><rect x="48.4" y="4.4" width="4.45" height="4.45" fill="rgb(80, 82, 105)"/><rect x="48.4" y="8.8" width="4.45" height="4.45" fill="rgb(132, 146, 168)"/><rect x="52.8" y="4.4" width="4.45" height="4.45" fill="rgb(108, 117, 137)"/><rect x="52.8" y="8.8" width="4.45" height="4.45" fill="rgb(84, 92, 119)"/><rect x="52.8" y="13.2" width="4.45" height="4.45" fill="rgb(158, 177, 204)"/><rect x="57.2" y="0.0" width="4.45" height="4.45" fill="rgb(173, 188, 213)"/><rect x="57.2" y="4.4" width="4.45" height="4.45" fill="rgb(115, 124, 142)"/><rect x="57.2" y="8.8" width="4.45" height="4.45" fill="rgb(123, 138, 161)"/><rect x="61.6" y="4.4" width="4.45" height="4.45" fill="rgb(113, 126, 148)"/><rect x="61.6" y="8.8" width="4.45" height="4.45" fill="rgb(123, 136, 158)"/><rect x="66.0" y="0.0" width="4.45" height="4.45" fill="rgb(166, 186, 211)"/><rect x="66.0" y="4.4" width="4.45" height="4.45" fill="rgb(106, 116, 130)"/><rect x="66.0" y="8.8" width="4.45" height="4.45" fill="rgb(88, 97, 121)"/><rect x="66.0" y="13.2" width="4.45" height="4.45" fill="rgb(152, 171, 199)"/><rect x="70.4" y="4.4" width="4.45" height="4.45" fill="rgb(132, 148, 170)"/><rect x="70.4" y="8.8" width="4.45" height="4.45" fill="rgb(76, 84, 103)"/><rect x="74.8" y="0.0" width="4.45" height="4.45" fill="rgb(169, 187, 209)"/><rect x="74.8" y="4.4" width="4.45" height="4.45" fill="rgb(126, 141, 164)"/><rect x="74.8" y="8.8" width="4.45" height="4.45" fill="rgb(98, 102, 128)"/><rect x="74.8" y="13.2" width="4.45" height="4.45" fill="rgb(169, 187, 213)"/><rect x="79.2" y="4.4" width="4.45" height="4.45" fill="rgb(146, 163, 186)"/><rect x="79.2" y="8.8" width="4.45" height="4.45" fill="rgb(113, 124, 147)"/><rect x="83.6" y="4.4" width="4.45" height="4.45" fill="rgb(100, 112, 131)"/><rect x="83.6" y="8.8" width="4.45" height="4.45" fill="rgb(101, 113, 128)"/><rect x="88.0" y="0.0" width="4.45" height="4.45" fill="rgb(152, 169, 198)"/><rect x="88.0" y="4.4" width="4.45" height="4.45" fill="rgb(77, 90, 107)"/><rect x="88.0" y="8.8" width="4.45" height="4.45" fill="rgb(121, 129, 146)"/><rect x="103.0" y="4.4" width="4.45" height="4.45" fill="rgb(126, 139, 153)"/><rect x="103.0" y="8.8" width="4.45" height="4.45" fill="rgb(122, 131, 151)"/><rect x="103.0" y="13.2" width="4.45" height="4.45" fill="rgb(164, 183, 206)"/><rect x="107.4" y="4.4" width="4.45" height="4.45" fill="rgb(133, 149, 172)"/><rect x="107.4" y="8.8" width="4.45" height="4.45" fill="rgb(118, 132, 153)"/><rect x="107.4" y="13.2" width="4.45" height="4.45" fill="rgb(169, 185, 212)"/><rect x="111.8" y="4.4" width="4.45" height="4.45" fill="rgb(97, 107, 130)"/><rect x="111.8" y="8.8" width="4.45" height="4.45" fill="rgb(120, 134, 156)"/><rect x="111.8" y="13.2" width="4.45" height="4.45" fill="rgb(159, 175, 203)"/><rect x="116.2" y="4.4" width="4.45" height="4.45" fill="rgb(122, 136, 158)"/><rect x="116.2" y="8.8" width="4.45" height="4.45" fill="rgb(125, 140, 163)"/><rect x="116.2" y="13.2" width="4.45" height="4.45" fill="rgb(174, 196, 216)"/><rect x="120.6" y="4.4" width="4.45" height="4.45" fill="rgb(95, 106, 127)"/><rect x="120.6" y="8.8" width="4.45" height="4.45" fill="rgb(141, 157, 180)"/><rect x="125.0" y="4.4" width="4.45" height="4.45" fill="rgb(134, 149, 172)"/><rect x="125.0" y="8.8" width="4.45" height="4.45" fill="rgb(81, 96, 109)"/><rect x="129.4" y="4.4" width="4.45" height="4.45" fill="rgb(147, 164, 187)"/><rect x="129.4" y="8.8" width="4.45" height="4.45" fill="rgb(149, 166, 190)"/><rect x="133.8" y="0.0" width="4.45" height="4.45" fill="rgb(156, 175, 206)"/><rect x="133.8" y="4.4" width="4.45" height="4.45" fill="rgb(94, 105, 128)"/><rect x="133.8" y="8.8" width="4.45" height="4.45" fill="rgb(148, 164, 187)"/><rect x="133.8" y="13.2" width="4.45" height="4.45" fill="rgb(163, 181, 210)"/><rect x="138.2" y="4.4" width="4.45" height="4.45" fill="rgb(117, 131, 153)"/><rect x="138.2" y="8.8" width="4.45" height="4.45" fill="rgb(106, 115, 139)"/><rect x="138.2" y="13.2" width="4.45" height="4.45" fill="rgb(161, 179, 209)"/><rect x="142.6" y="4.4" width="4.45" height="4.45" fill="rgb(96, 106, 124)"/><rect x="142.6" y="8.8" width="4.45" height="4.45" fill="rgb(140, 156, 179)"/><rect x="142.6" y="13.2" width="4.45" height="4.45" fill="rgb(172, 192, 211)"/><rect x="147.0" y="0.0" width="4.45" height="4.45" fill="rgb(157, 174, 196)"/><rect x="147.0" y="4.4" width="4.45" height="4.45" fill="rgb(71, 87, 102)"/><rect x="147.0" y="8.8" width="4.45" height="4.45" fill="rgb(97, 108, 133)"/><rect x="151.4" y="0.0" width="4.45" height="4.45" fill="rgb(155, 179, 200)"/><rect x="151.4" y="4.4" width="4.45" height="4.45" fill="rgb(127, 142, 164)"/><rect x="151.4" y="8.8" width="4.45" height="4.45" fill="rgb(111, 121, 142)"/><rect x="155.8" y="4.4" width="4.45" height="4.45" fill="rgb(113, 117, 141)"/><rect x="155.8" y="8.8" width="4.45" height="4.45" fill="rgb(93, 96, 123)"/><rect x="155.8" y="13.2" width="4.45" height="4.45" fill="rgb(170, 189, 216)"/></svg>
<svg class="a" style="left:936px;top:369.80px" width="34" height="17.6"><rect x="0.0" y="0.0" width="4.45" height="4.45" fill="rgb(221, 220, 219)"/><rect x="0.0" y="4.4" width="4.45" height="4.45" fill="rgb(169, 164, 174)"/><rect x="0.0" y="8.8" width="4.45" height="4.45" fill="rgb(150, 151, 153)"/><rect x="0.0" y="13.2" width="4.45" height="4.45" fill="rgb(224, 224, 219)"/><rect x="4.4" y="4.4" width="4.45" height="4.45" fill="rgb(193, 193, 195)"/><rect x="4.4" y="8.8" width="4.45" height="4.45" fill="rgb(162, 157, 166)"/><rect x="4.4" y="13.2" width="4.45" height="4.45" fill="rgb(208, 206, 208)"/><rect x="8.8" y="4.4" width="4.45" height="4.45" fill="rgb(183, 185, 187)"/><rect x="8.8" y="8.8" width="4.45" height="4.45" fill="rgb(200, 200, 202)"/><rect x="8.8" y="13.2" width="4.45" height="4.45" fill="rgb(221, 223, 219)"/><rect x="13.2" y="0.0" width="4.45" height="4.45" fill="rgb(219, 216, 218)"/><rect x="13.2" y="4.4" width="4.45" height="4.45" fill="rgb(194, 194, 197)"/><rect x="13.2" y="8.8" width="4.45" height="4.45" fill="rgb(178, 174, 183)"/><rect x="17.6" y="4.4" width="4.45" height="4.45" fill="rgb(184, 184, 186)"/><rect x="17.6" y="8.8" width="4.45" height="4.45" fill="rgb(160, 159, 158)"/><rect x="22.0" y="4.4" width="4.45" height="4.45" fill="rgb(147, 154, 156)"/><rect x="22.0" y="8.8" width="4.45" height="4.45" fill="rgb(187, 189, 194)"/><rect x="22.0" y="13.2" width="4.45" height="4.45" fill="rgb(207, 206, 207)"/><rect x="26.4" y="4.4" width="4.45" height="4.45" fill="rgb(189, 185, 194)"/><rect x="26.4" y="8.8" width="4.45" height="4.45" fill="rgb(154, 153, 155)"/><rect x="26.4" y="13.2" width="4.45" height="4.45" fill="rgb(226, 224, 222)"/></svg>
<svg class="a" style="left:975px;top:369.80px" width="129" height="17.6"><rect x="0.0" y="4.4" width="4.45" height="4.45" fill="rgb(179, 170, 199)"/><rect x="0.0" y="8.8" width="4.45" height="4.45" fill="rgb(121, 109, 135)"/><rect x="4.4" y="0.0" width="4.45" height="4.45" fill="rgb(197, 187, 221)"/><rect x="4.4" y="4.4" width="4.45" height="4.45" fill="rgb(115, 103, 134)"/><rect x="4.4" y="8.8" width="4.45" height="4.45" fill="rgb(170, 160, 190)"/><rect x="8.8" y="4.4" width="4.45" height="4.45" fill="rgb(103, 89, 118)"/><rect x="8.8" y="8.8" width="4.45" height="4.45" fill="rgb(124, 117, 142)"/><rect x="13.2" y="4.4" width="4.45" height="4.45" fill="rgb(137, 126, 159)"/><rect x="13.2" y="8.8" width="4.45" height="4.45" fill="rgb(100, 95, 120)"/><rect x="13.2" y="13.2" width="4.45" height="4.45" fill="rgb(205, 192, 226)"/><rect x="17.6" y="4.4" width="4.45" height="4.45" fill="rgb(127, 113, 148)"/><rect x="17.6" y="8.8" width="4.45" height="4.45" fill="rgb(130, 120, 149)"/><rect x="22.0" y="4.4" width="4.45" height="4.45" fill="rgb(171, 162, 191)"/><rect x="22.0" y="8.8" width="4.45" height="4.45" fill="rgb(120, 115, 141)"/><rect x="26.4" y="4.4" width="4.45" height="4.45" fill="rgb(108, 100, 125)"/><rect x="26.4" y="8.8" width="4.45" height="4.45" fill="rgb(139, 132, 162)"/><rect x="26.4" y="13.2" width="4.45" height="4.45" fill="rgb(195, 188, 215)"/><rect x="30.8" y="4.4" width="4.45" height="4.45" fill="rgb(94, 90, 116)"/><rect x="30.8" y="8.8" width="4.45" height="4.45" fill="rgb(101, 97, 123)"/><rect x="35.2" y="4.4" width="4.45" height="4.45" fill="rgb(122, 119, 143)"/><rect x="35.2" y="8.8" width="4.45" height="4.45" fill="rgb(119, 107, 143)"/><rect x="39.6" y="4.4" width="4.45" height="4.45" fill="rgb(128, 115, 143)"/><rect x="39.6" y="8.8" width="4.45" height="4.45" fill="rgb(161, 153, 181)"/><rect x="39.6" y="13.2" width="4.45" height="4.45" fill="rgb(195, 184, 217)"/><rect x="44.0" y="4.4" width="4.45" height="4.45" fill="rgb(159, 150, 179)"/><rect x="44.0" y="8.8" width="4.45" height="4.45" fill="rgb(140, 136, 160)"/><rect x="48.4" y="4.4" width="4.45" height="4.45" fill="rgb(142, 133, 162)"/><rect x="48.4" y="8.8" width="4.45" height="4.45" fill="rgb(100, 86, 121)"/><rect x="52.8" y="0.0" width="4.45" height="4.45" fill="rgb(207, 199, 227)"/><rect x="52.8" y="4.4" width="4.45" height="4.45" fill="rgb(117, 106, 139)"/><rect x="52.8" y="8.8" width="4.45" height="4.45" fill="rgb(148, 139, 168)"/><rect x="52.8" y="13.2" width="4.45" height="4.45" fill="rgb(208, 197, 226)"/><rect x="57.2" y="4.4" width="4.45" height="4.45" fill="rgb(115, 111, 140)"/><rect x="57.2" y="8.8" width="4.45" height="4.45" fill="rgb(133, 120, 152)"/><rect x="57.2" y="13.2" width="4.45" height="4.45" fill="rgb(185, 177, 204)"/><rect x="69.0" y="4.4" width="4.45" height="4.45" fill="rgb(141, 126, 161)"/><rect x="69.0" y="8.8" width="4.45" height="4.45" fill="rgb(99, 85, 115)"/><rect x="73.4" y="0.0" width="4.45" height="4.45" fill="rgb(209, 201, 225)"/><rect x="73.4" y="4.4" width="4.45" height="4.45" fill="rgb(103, 96, 121)"/><rect x="73.4" y="8.8" width="4.45" height="4.45" fill="rgb(121, 112, 146)"/><rect x="73.4" y="13.2" width="4.45" height="4.45" fill="rgb(198, 185, 216)"/><rect x="77.8" y="4.4" width="4.45" height="4.45" fill="rgb(110, 100, 131)"/><rect x="77.8" y="8.8" width="4.45" height="4.45" fill="rgb(129, 126, 153)"/><rect x="82.2" y="0.0" width="4.45" height="4.45" fill="rgb(196, 187, 220)"/><rect x="82.2" y="4.4" width="4.45" height="4.45" fill="rgb(105, 99, 123)"/><rect x="82.2" y="8.8" width="4.45" height="4.45" fill="rgb(119, 119, 145)"/><rect x="82.2" y="13.2" width="4.45" height="4.45" fill="rgb(194, 181, 213)"/><rect x="86.6" y="0.0" width="4.45" height="4.45" fill="rgb(197, 189, 215)"/><rect x="86.6" y="4.4" width="4.45" height="4.45" fill="rgb(107, 104, 127)"/><rect x="86.6" y="8.8" width="4.45" height="4.45" fill="rgb(179, 170, 199)"/><rect x="101.0" y="4.4" width="4.45" height="4.45" fill="rgb(134, 129, 155)"/><rect x="101.0" y="8.8" width="4.45" height="4.45" fill="rgb(124, 122, 148)"/><rect x="101.0" y="13.2" width="4.45" height="4.45" fill="rgb(199, 192, 216)"/><rect x="105.4" y="0.0" width="4.45" height="4.45" fill="rgb(190, 183, 207)"/><rect x="105.4" y="4.4" width="4.45" height="4.45" fill="rgb(148, 138, 164)"/><rect x="105.4" y="8.8" width="4.45" height="4.45" fill="rgb(141, 140, 164)"/><rect x="105.4" y="13.2" width="4.45" height="4.45" fill="rgb(184, 179, 210)"/><rect x="109.8" y="4.4" width="4.45" height="4.45" fill="rgb(95, 88, 121)"/><rect x="109.8" y="8.8" width="4.45" height="4.45" fill="rgb(115, 107, 134)"/><rect x="114.2" y="0.0" width="4.45" height="4.45" fill="rgb(201, 191, 223)"/><rect x="114.2" y="4.4" width="4.45" height="4.45" fill="rgb(151, 142, 171)"/><rect x="114.2" y="8.8" width="4.45" height="4.45" fill="rgb(114, 100, 135)"/><rect x="118.6" y="4.4" width="4.45" height="4.45" fill="rgb(131, 125, 155)"/><rect x="118.6" y="8.8" width="4.45" height="4.45" fill="rgb(112, 103, 125)"/><rect x="118.6" y="13.2" width="4.45" height="4.45" fill="rgb(211, 198, 226)"/><rect x="123.0" y="4.4" width="4.45" height="4.45" fill="rgb(167, 158, 187)"/><rect x="123.0" y="8.8" width="4.45" height="4.45" fill="rgb(144, 129, 159)"/><rect x="123.0" y="13.2" width="4.45" height="4.45" fill="rgb(192, 180, 211)"/></svg>
<svg class="a" style="left:936px;top:391.00px" width="248" height="17.6"><rect x="0.0" y="4.4" width="4.45" height="4.45" fill="rgb(188, 188, 190)"/><rect x="0.0" y="8.8" width="4.45" height="4.45" fill="rgb(175, 175, 178)"/><rect x="4.4" y="0.0" width="4.45" height="4.45" fill="rgb(213, 210, 210)"/><rect x="4.4" y="4.4" width="4.45" height="4.45" fill="rgb(168, 167, 169)"/><rect x="4.4" y="8.8" width="4.45" height="4.45" fill="rgb(176, 176, 182)"/><rect x="4.4" y="13.2" width="4.45" height="4.45" fill="rgb(219, 219, 216)"/><rect x="8.8" y="4.4" width="4.45" height="4.45" fill="rgb(146, 149, 152)"/><rect x="8.8" y="8.8" width="4.45" height="4.45" fill="rgb(151, 151, 156)"/><rect x="8.8" y="13.2" width="4.45" height="4.45" fill="rgb(200, 202, 205)"/><rect x="13.2" y="0.0" width="4.45" height="4.45" fill="rgb(208, 205, 204)"/><rect x="13.2" y="4.4" width="4.45" height="4.45" fill="rgb(176, 176, 179)"/><rect x="13.2" y="8.8" width="4.45" height="4.45" fill="rgb(188, 188, 190)"/><rect x="17.6" y="0.0" width="4.45" height="4.45" fill="rgb(219, 221, 223)"/><rect x="17.6" y="4.4" width="4.45" height="4.45" fill="rgb(147, 142, 148)"/><rect x="17.6" y="8.8" width="4.45" height="4.45" fill="rgb(199, 199, 201)"/><rect x="17.6" y="13.2" width="4.45" height="4.45" fill="rgb(216, 220, 217)"/><rect x="22.0" y="4.4" width="4.45" height="4.45" fill="rgb(189, 189, 191)"/><rect x="22.0" y="8.8" width="4.45" height="4.45" fill="rgb(173, 173, 176)"/><rect x="26.4" y="4.4" width="4.45" height="4.45" fill="rgb(168, 160, 167)"/><rect x="26.4" y="8.8" width="4.45" height="4.45" fill="rgb(168, 165, 165)"/><rect x="26.4" y="13.2" width="4.45" height="4.45" fill="rgb(220, 220, 222)"/><rect x="30.8" y="0.0" width="4.45" height="4.45" fill="rgb(204, 205, 201)"/><rect x="30.8" y="4.4" width="4.45" height="4.45" fill="rgb(186, 186, 188)"/><rect x="30.8" y="8.8" width="4.45" height="4.45" fill="rgb(175, 177, 180)"/><rect x="35.2" y="4.4" width="4.45" height="4.45" fill="rgb(181, 181, 184)"/><rect x="35.2" y="8.8" width="4.45" height="4.45" fill="rgb(143, 138, 145)"/><rect x="35.2" y="13.2" width="4.45" height="4.45" fill="rgb(204, 206, 205)"/><rect x="44.0" y="4.4" width="4.45" height="4.45" fill="rgb(208, 208, 210)"/><rect x="44.0" y="8.8" width="4.45" height="4.45" fill="rgb(145, 146, 153)"/><rect x="48.4" y="0.0" width="4.45" height="4.45" fill="rgb(207, 208, 210)"/><rect x="48.4" y="4.4" width="4.45" height="4.45" fill="rgb(175, 174, 183)"/><rect x="48.4" y="8.8" width="4.45" height="4.45" fill="rgb(160, 159, 166)"/><rect x="52.8" y="4.4" width="4.45" height="4.45" fill="rgb(180, 180, 183)"/><rect x="52.8" y="8.8" width="4.45" height="4.45" fill="rgb(139, 132, 144)"/><rect x="57.2" y="0.0" width="4.45" height="4.45" fill="rgb(198, 199, 199)"/><rect x="57.2" y="4.4" width="4.45" height="4.45" fill="rgb(192, 192, 194)"/><rect x="57.2" y="8.8" width="4.45" height="4.45" fill="rgb(181, 181, 184)"/><rect x="61.6" y="4.4" width="4.45" height="4.45" fill="rgb(191, 191, 194)"/><rect x="61.6" y="8.8" width="4.45" height="4.45" fill="rgb(203, 203, 204)"/><rect x="66.0" y="4.4" width="4.45" height="4.45" fill="rgb(193, 191, 196)"/><rect x="66.0" y="8.8" width="4.45" height="4.45" fill="rgb(189, 183, 194)"/><rect x="66.0" y="13.2" width="4.45" height="4.45" fill="rgb(205, 206, 205)"/><rect x="70.4" y="4.4" width="4.45" height="4.45" fill="rgb(198, 198, 200)"/><rect x="70.4" y="8.8" width="4.45" height="4.45" fill="rgb(188, 183, 189)"/><rect x="74.8" y="4.4" width="4.45" height="4.45" fill="rgb(177, 179, 187)"/><rect x="74.8" y="8.8" width="4.45" height="4.45" fill="rgb(140, 143, 151)"/><rect x="79.2" y="0.0" width="4.45" height="4.45" fill="rgb(212, 214, 213)"/><rect x="79.2" y="4.4" width="4.45" height="4.45" fill="rgb(188, 188, 191)"/><rect x="79.2" y="8.8" width="4.45" height="4.45" fill="rgb(186, 186, 189)"/><rect x="83.6" y="4.4" width="4.45" height="4.45" fill="rgb(180, 185, 186)"/><rect x="83.6" y="8.8" width="4.45" height="4.45" fill="rgb(158, 161, 160)"/><rect x="88.0" y="4.4" width="4.45" height="4.45" fill="rgb(188, 188, 191)"/><rect x="88.0" y="8.8" width="4.45" height="4.45" fill="rgb(148, 156, 156)"/><rect x="100.0" y="0.0" width="4.45" height="4.45" fill="rgb(218, 215, 219)"/><rect x="100.0" y="4.4" width="4.45" height="4.45" fill="rgb(144, 144, 151)"/><rect x="100.0" y="8.8" width="4.45" height="4.45" fill="rgb(194, 194, 197)"/><rect x="100.0" y="13.2" width="4.45" height="4.45" fill="rgb(204, 204, 203)"/><rect x="104.4" y="4.4" width="4.45" height="4.45" fill="rgb(189, 189, 190)"/><rect x="104.4" y="8.8" width="4.45" height="4.45" fill="rgb(143, 140, 151)"/><rect x="104.4" y="13.2" width="4.45" height="4.45" fill="rgb(201, 201, 201)"/><rect x="108.8" y="4.4" width="4.45" height="4.45" fill="rgb(174, 175, 182)"/><rect x="108.8" y="8.8" width="4.45" height="4.45" fill="rgb(159, 164, 169)"/><rect x="113.2" y="4.4" width="4.45" height="4.45" fill="rgb(142, 143, 148)"/><rect x="113.2" y="8.8" width="4.45" height="4.45" fill="rgb(150, 149, 155)"/><rect x="113.2" y="13.2" width="4.45" height="4.45" fill="rgb(211, 210, 206)"/><rect x="117.6" y="4.4" width="4.45" height="4.45" fill="rgb(181, 181, 184)"/><rect x="117.6" y="8.8" width="4.45" height="4.45" fill="rgb(185, 185, 188)"/><rect x="122.0" y="4.4" width="4.45" height="4.45" fill="rgb(167, 166, 177)"/><rect x="122.0" y="8.8" width="4.45" height="4.45" fill="rgb(195, 195, 197)"/><rect x="122.0" y="13.2" width="4.45" height="4.45" fill="rgb(210, 211, 213)"/><rect x="126.4" y="4.4" width="4.45" height="4.45" fill="rgb(183, 183, 186)"/><rect x="126.4" y="8.8" width="4.45" height="4.45" fill="rgb(191, 191, 188)"/><rect x="126.4" y="13.2" width="4.45" height="4.45" fill="rgb(208, 209, 205)"/><rect x="130.8" y="4.4" width="4.45" height="4.45" fill="rgb(195, 195, 197)"/><rect x="130.8" y="8.8" width="4.45" height="4.45" fill="rgb(176, 176, 179)"/><rect x="130.8" y="13.2" width="4.45" height="4.45" fill="rgb(208, 208, 202)"/><rect x="135.2" y="4.4" width="4.45" height="4.45" fill="rgb(204, 204, 206)"/><rect x="135.2" y="8.8" width="4.45" height="4.45" fill="rgb(151, 149, 154)"/><rect x="139.6" y="4.4" width="4.45" height="4.45" fill="rgb(155, 160, 159)"/><rect x="139.6" y="8.8" width="4.45" height="4.45" fill="rgb(160, 167, 164)"/><rect x="139.6" y="13.2" width="4.45" height="4.45" fill="rgb(211, 207, 207)"/><rect x="144.0" y="4.4" width="4.45" height="4.45" fill="rgb(189, 189, 192)"/><rect x="144.0" y="8.8" width="4.45" height="4.45" fill="rgb(178, 178, 181)"/><rect x="148.4" y="0.0" width="4.45" height="4.45" fill="rgb(226, 226, 221)"/><rect x="148.4" y="4.4" width="4.45" height="4.45" fill="rgb(172, 178, 182)"/><rect x="148.4" y="8.8" width="4.45" height="4.45" fill="rgb(177, 177, 180)"/><rect x="148.4" y="13.2" width="4.45" height="4.45" fill="rgb(218, 220, 217)"/><rect x="152.8" y="0.0" width="4.45" height="4.45" fill="rgb(216, 217, 216)"/><rect x="152.8" y="4.4" width="4.45" height="4.45" fill="rgb(200, 200, 202)"/><rect x="152.8" y="8.8" width="4.45" height="4.45" fill="rgb(145, 144, 148)"/><rect x="157.2" y="0.0" width="4.45" height="4.45" fill="rgb(204, 204, 205)"/><rect x="157.2" y="4.4" width="4.45" height="4.45" fill="rgb(137, 140, 147)"/><rect x="157.2" y="8.8" width="4.45" height="4.45" fill="rgb(188, 188, 191)"/><rect x="161.6" y="4.4" width="4.45" height="4.45" fill="rgb(187, 187, 189)"/><rect x="161.6" y="8.8" width="4.45" height="4.45" fill="rgb(190, 190, 192)"/><rect x="161.6" y="13.2" width="4.45" height="4.45" fill="rgb(217, 216, 214)"/><rect x="166.0" y="4.4" width="4.45" height="4.45" fill="rgb(188, 185, 190)"/><rect x="166.0" y="8.8" width="4.45" height="4.45" fill="rgb(183, 183, 186)"/><rect x="166.0" y="13.2" width="4.45" height="4.45" fill="rgb(212, 209, 207)"/><rect x="170.4" y="4.4" width="4.45" height="4.45" fill="rgb(134, 140, 142)"/><rect x="170.4" y="8.8" width="4.45" height="4.45" fill="rgb(181, 181, 185)"/><rect x="174.8" y="0.0" width="4.45" height="4.45" fill="rgb(200, 197, 199)"/><rect x="174.8" y="4.4" width="4.45" height="4.45" fill="rgb(188, 188, 191)"/><rect x="174.8" y="8.8" width="4.45" height="4.45" fill="rgb(190, 190, 192)"/><rect x="174.8" y="13.2" width="4.45" height="4.45" fill="rgb(201, 203, 199)"/><rect x="179.2" y="4.4" width="4.45" height="4.45" fill="rgb(149, 154, 154)"/><rect x="179.2" y="8.8" width="4.45" height="4.45" fill="rgb(156, 160, 161)"/><rect x="183.6" y="4.4" width="4.45" height="4.45" fill="rgb(184, 183, 193)"/><rect x="183.6" y="8.8" width="4.45" height="4.45" fill="rgb(196, 196, 198)"/><rect x="183.6" y="13.2" width="4.45" height="4.45" fill="rgb(202, 197, 202)"/><rect x="196.0" y="0.0" width="4.45" height="4.45" fill="rgb(221, 220, 220)"/><rect x="196.0" y="4.4" width="4.45" height="4.45" fill="rgb(173, 177, 178)"/><rect x="196.0" y="8.8" width="4.45" height="4.45" fill="rgb(167, 174, 172)"/><rect x="200.4" y="0.0" width="4.45" height="4.45" fill="rgb(209, 208, 211)"/><rect x="200.4" y="4.4" width="4.45" height="4.45" fill="rgb(133, 140, 139)"/><rect x="200.4" y="8.8" width="4.45" height="4.45" fill="rgb(149, 144, 154)"/><rect x="204.8" y="4.4" width="4.45" height="4.45" fill="rgb(192, 192, 194)"/><rect x="204.8" y="8.8" width="4.45" height="4.45" fill="rgb(144, 146, 149)"/><rect x="209.2" y="0.0" width="4.45" height="4.45" fill="rgb(210, 206, 208)"/><rect x="209.2" y="4.4" width="4.45" height="4.45" fill="rgb(183, 183, 186)"/><rect x="209.2" y="8.8" width="4.45" height="4.45" fill="rgb(176, 170, 173)"/><rect x="213.6" y="4.4" width="4.45" height="4.45" fill="rgb(164, 172, 169)"/><rect x="213.6" y="8.8" width="4.45" height="4.45" fill="rgb(189, 189, 191)"/><rect x="218.0" y="4.4" width="4.45" height="4.45" fill="rgb(140, 137, 143)"/><rect x="218.0" y="8.8" width="4.45" height="4.45" fill="rgb(193, 193, 195)"/><rect x="218.0" y="13.2" width="4.45" height="4.45" fill="rgb(215, 210, 211)"/><rect x="222.4" y="0.0" width="4.45" height="4.45" fill="rgb(208, 206, 206)"/><rect x="222.4" y="4.4" width="4.45" height="4.45" fill="rgb(197, 197, 198)"/><rect x="222.4" y="8.8" width="4.45" height="4.45" fill="rgb(182, 182, 186)"/><rect x="222.4" y="13.2" width="4.45" height="4.45" fill="rgb(204, 202, 205)"/><rect x="226.8" y="4.4" width="4.45" height="4.45" fill="rgb(165, 161, 167)"/><rect x="226.8" y="8.8" width="4.45" height="4.45" fill="rgb(136, 134, 138)"/><rect x="226.8" y="13.2" width="4.45" height="4.45" fill="rgb(200, 202, 203)"/><rect x="231.2" y="0.0" width="4.45" height="4.45" fill="rgb(208, 209, 212)"/><rect x="231.2" y="4.4" width="4.45" height="4.45" fill="rgb(178, 178, 182)"/><rect x="231.2" y="8.8" width="4.45" height="4.45" fill="rgb(151, 145, 154)"/><rect x="235.6" y="4.4" width="4.45" height="4.45" fill="rgb(201, 201, 203)"/><rect x="235.6" y="8.8" width="4.45" height="4.45" fill="rgb(162, 162, 163)"/><rect x="240.0" y="4.4" width="4.45" height="4.45" fill="rgb(150, 149, 155)"/><rect x="240.0" y="8.8" width="4.45" height="4.45" fill="rgb(181, 179, 183)"/><rect x="240.0" y="13.2" width="4.45" height="4.45" fill="rgb(208, 207, 210)"/></svg>
<svg class="a" style="left:936px;top:412.20px" width="58" height="17.6"><rect x="0.0" y="0.0" width="4.45" height="4.45" fill="rgb(222, 224, 221)"/><rect x="0.0" y="4.4" width="4.45" height="4.45" fill="rgb(141, 142, 141)"/><rect x="0.0" y="8.8" width="4.45" height="4.45" fill="rgb(136, 136, 146)"/><rect x="4.4" y="4.4" width="4.45" height="4.45" fill="rgb(172, 172, 174)"/><rect x="4.4" y="8.8" width="4.45" height="4.45" fill="rgb(174, 175, 173)"/><rect x="8.8" y="4.4" width="4.45" height="4.45" fill="rgb(184, 184, 187)"/><rect x="8.8" y="8.8" width="4.45" height="4.45" fill="rgb(131, 131, 135)"/><rect x="13.2" y="4.4" width="4.45" height="4.45" fill="rgb(154, 154, 157)"/><rect x="13.2" y="8.8" width="4.45" height="4.45" fill="rgb(176, 174, 181)"/><rect x="13.2" y="13.2" width="4.45" height="4.45" fill="rgb(224, 224, 222)"/><rect x="17.6" y="4.4" width="4.45" height="4.45" fill="rgb(163, 164, 167)"/><rect x="17.6" y="8.8" width="4.45" height="4.45" fill="rgb(138, 136, 139)"/><rect x="30.0" y="4.4" width="4.45" height="4.45" fill="rgb(158, 156, 157)"/><rect x="30.0" y="8.8" width="4.45" height="4.45" fill="rgb(174, 174, 177)"/><rect x="34.4" y="4.4" width="4.45" height="4.45" fill="rgb(164, 159, 166)"/><rect x="34.4" y="8.8" width="4.45" height="4.45" fill="rgb(203, 203, 205)"/><rect x="38.8" y="4.4" width="4.45" height="4.45" fill="rgb(188, 188, 190)"/><rect x="38.8" y="8.8" width="4.45" height="4.45" fill="rgb(190, 190, 192)"/><rect x="38.8" y="13.2" width="4.45" height="4.45" fill="rgb(208, 205, 204)"/><rect x="43.2" y="0.0" width="4.45" height="4.45" fill="rgb(203, 202, 203)"/><rect x="43.2" y="4.4" width="4.45" height="4.45" fill="rgb(177, 177, 181)"/><rect x="43.2" y="8.8" width="4.45" height="4.45" fill="rgb(168, 173, 180)"/><rect x="47.6" y="4.4" width="4.45" height="4.45" fill="rgb(190, 190, 191)"/><rect x="47.6" y="8.8" width="4.45" height="4.45" fill="rgb(178, 179, 177)"/><rect x="52.0" y="0.0" width="4.45" height="4.45" fill="rgb(210, 207, 205)"/><rect x="52.0" y="4.4" width="4.45" height="4.45" fill="rgb(137, 132, 141)"/><rect x="52.0" y="8.8" width="4.45" height="4.45" fill="rgb(167, 167, 170)"/></svg>
<div class="em" style="left:919px;top:505.7px;-webkit-text-stroke:0.25px #1e1e1e">Kin</div>
<svg class="a" style="left:936px;top:502.90px" width="106" height="17.6"><rect x="0.0" y="0.0" width="4.45" height="4.45" fill="rgb(223, 220, 220)"/><rect x="0.0" y="4.4" width="4.45" height="4.45" fill="rgb(189, 189, 192)"/><rect x="0.0" y="8.8" width="4.45" height="4.45" fill="rgb(206, 206, 209)"/><rect x="4.4" y="4.4" width="4.45" height="4.45" fill="rgb(185, 186, 188)"/><rect x="4.4" y="8.8" width="4.45" height="4.45" fill="rgb(182, 182, 185)"/><rect x="8.8" y="4.4" width="4.45" height="4.45" fill="rgb(162, 163, 166)"/><rect x="8.8" y="8.8" width="4.45" height="4.45" fill="rgb(208, 208, 211)"/><rect x="8.8" y="13.2" width="4.45" height="4.45" fill="rgb(237, 236, 234)"/><rect x="13.2" y="4.4" width="4.45" height="4.45" fill="rgb(213, 213, 216)"/><rect x="13.2" y="8.8" width="4.45" height="4.45" fill="rgb(200, 194, 199)"/><rect x="17.6" y="4.4" width="4.45" height="4.45" fill="rgb(207, 207, 210)"/><rect x="17.6" y="8.8" width="4.45" height="4.45" fill="rgb(170, 172, 174)"/><rect x="22.0" y="0.0" width="4.45" height="4.45" fill="rgb(225, 227, 228)"/><rect x="22.0" y="4.4" width="4.45" height="4.45" fill="rgb(190, 188, 190)"/><rect x="22.0" y="8.8" width="4.45" height="4.45" fill="rgb(195, 195, 198)"/><rect x="32.0" y="4.4" width="4.45" height="4.45" fill="rgb(212, 212, 215)"/><rect x="32.0" y="8.8" width="4.45" height="4.45" fill="rgb(199, 195, 204)"/><rect x="32.0" y="13.2" width="4.45" height="4.45" fill="rgb(228, 229, 226)"/><rect x="36.4" y="0.0" width="4.45" height="4.45" fill="rgb(226, 222, 225)"/><rect x="36.4" y="4.4" width="4.45" height="4.45" fill="rgb(155, 148, 155)"/><rect x="36.4" y="8.8" width="4.45" height="4.45" fill="rgb(185, 187, 191)"/><rect x="36.4" y="13.2" width="4.45" height="4.45" fill="rgb(242, 237, 241)"/><rect x="40.8" y="0.0" width="4.45" height="4.45" fill="rgb(239, 237, 237)"/><rect x="40.8" y="4.4" width="4.45" height="4.45" fill="rgb(214, 214, 217)"/><rect x="40.8" y="8.8" width="4.45" height="4.45" fill="rgb(198, 198, 201)"/><rect x="45.2" y="4.4" width="4.45" height="4.45" fill="rgb(197, 201, 208)"/><rect x="45.2" y="8.8" width="4.45" height="4.45" fill="rgb(213, 213, 216)"/><rect x="45.2" y="13.2" width="4.45" height="4.45" fill="rgb(230, 228, 231)"/><rect x="49.6" y="0.0" width="4.45" height="4.45" fill="rgb(216, 215, 221)"/><rect x="49.6" y="4.4" width="4.45" height="4.45" fill="rgb(186, 186, 190)"/><rect x="49.6" y="8.8" width="4.45" height="4.45" fill="rgb(191, 191, 194)"/><rect x="60.0" y="4.4" width="4.45" height="4.45" fill="rgb(207, 207, 210)"/><rect x="60.0" y="8.8" width="4.45" height="4.45" fill="rgb(213, 213, 216)"/><rect x="64.4" y="4.4" width="4.45" height="4.45" fill="rgb(196, 194, 195)"/><rect x="64.4" y="8.8" width="4.45" height="4.45" fill="rgb(182, 180, 185)"/><rect x="68.8" y="4.4" width="4.45" height="4.45" fill="rgb(199, 204, 205)"/><rect x="68.8" y="8.8" width="4.45" height="4.45" fill="rgb(172, 171, 178)"/><rect x="73.2" y="0.0" width="4.45" height="4.45" fill="rgb(233, 238, 236)"/><rect x="73.2" y="4.4" width="4.45" height="4.45" fill="rgb(206, 206, 208)"/><rect x="73.2" y="8.8" width="4.45" height="4.45" fill="rgb(208, 208, 211)"/><rect x="73.2" y="13.2" width="4.45" height="4.45" fill="rgb(238, 237, 241)"/><rect x="77.6" y="0.0" width="4.45" height="4.45" fill="rgb(231, 233, 231)"/><rect x="77.6" y="4.4" width="4.45" height="4.45" fill="rgb(169, 168, 173)"/><rect x="77.6" y="8.8" width="4.45" height="4.45" fill="rgb(158, 160, 168)"/><rect x="82.0" y="4.4" width="4.45" height="4.45" fill="rgb(201, 201, 204)"/><rect x="82.0" y="8.8" width="4.45" height="4.45" fill="rgb(157, 160, 157)"/><rect x="86.4" y="0.0" width="4.45" height="4.45" fill="rgb(228, 224, 226)"/><rect x="86.4" y="4.4" width="4.45" height="4.45" fill="rgb(200, 200, 203)"/><rect x="86.4" y="8.8" width="4.45" height="4.45" fill="rgb(196, 196, 199)"/><rect x="90.8" y="4.4" width="4.45" height="4.45" fill="rgb(153, 150, 159)"/><rect x="90.8" y="8.8" width="4.45" height="4.45" fill="rgb(200, 200, 203)"/><rect x="95.2" y="4.4" width="4.45" height="4.45" fill="rgb(197, 197, 200)"/><rect x="95.2" y="8.8" width="4.45" height="4.45" fill="rgb(165, 160, 167)"/><rect x="95.2" y="13.2" width="4.45" height="4.45" fill="rgb(233, 237, 235)"/><rect x="99.6" y="0.0" width="4.45" height="4.45" fill="rgb(232, 229, 231)"/><rect x="99.6" y="4.4" width="4.45" height="4.45" fill="rgb(221, 221, 224)"/><rect x="99.6" y="8.8" width="4.45" height="4.45" fill="rgb(181, 177, 179)"/><rect x="99.6" y="13.2" width="4.45" height="4.45" fill="rgb(218, 216, 221)"/></svg>
<div class="em" style="left:919px;top:527.0px;-webkit-text-stroke:0.25px #1e1e1e">Sla</div>
<svg class="a" style="left:936px;top:524.20px" width="62" height="17.6"><rect x="0.0" y="0.0" width="4.45" height="4.45" fill="rgb(221, 222, 227)"/><rect x="0.0" y="4.4" width="4.45" height="4.45" fill="rgb(220, 220, 222)"/><rect x="0.0" y="8.8" width="4.45" height="4.45" fill="rgb(172, 169, 168)"/><rect x="4.4" y="4.4" width="4.45" height="4.45" fill="rgb(203, 203, 206)"/><rect x="4.4" y="8.8" width="4.45" height="4.45" fill="rgb(198, 198, 201)"/><rect x="8.8" y="4.4" width="4.45" height="4.45" fill="rgb(165, 169, 167)"/><rect x="8.8" y="8.8" width="4.45" height="4.45" fill="rgb(154, 147, 152)"/><rect x="13.2" y="4.4" width="4.45" height="4.45" fill="rgb(215, 215, 218)"/><rect x="13.2" y="8.8" width="4.45" height="4.45" fill="rgb(170, 165, 175)"/><rect x="17.6" y="4.4" width="4.45" height="4.45" fill="rgb(222, 222, 224)"/><rect x="17.6" y="8.8" width="4.45" height="4.45" fill="rgb(165, 166, 171)"/><rect x="17.6" y="13.2" width="4.45" height="4.45" fill="rgb(238, 241, 239)"/><rect x="22.0" y="4.4" width="4.45" height="4.45" fill="rgb(174, 176, 185)"/><rect x="22.0" y="8.8" width="4.45" height="4.45" fill="rgb(149, 151, 157)"/><rect x="22.0" y="13.2" width="4.45" height="4.45" fill="rgb(224, 226, 225)"/><rect x="26.4" y="0.0" width="4.45" height="4.45" fill="rgb(218, 215, 221)"/><rect x="26.4" y="4.4" width="4.45" height="4.45" fill="rgb(195, 195, 198)"/><rect x="26.4" y="8.8" width="4.45" height="4.45" fill="rgb(202, 204, 211)"/><rect x="30.8" y="0.0" width="4.45" height="4.45" fill="rgb(229, 230, 233)"/><rect x="30.8" y="4.4" width="4.45" height="4.45" fill="rgb(205, 199, 206)"/><rect x="30.8" y="8.8" width="4.45" height="4.45" fill="rgb(196, 196, 199)"/><rect x="35.2" y="4.4" width="4.45" height="4.45" fill="rgb(146, 149, 154)"/><rect x="35.2" y="8.8" width="4.45" height="4.45" fill="rgb(211, 211, 214)"/><rect x="39.6" y="4.4" width="4.45" height="4.45" fill="rgb(213, 213, 215)"/><rect x="39.6" y="8.8" width="4.45" height="4.45" fill="rgb(208, 208, 211)"/><rect x="44.0" y="0.0" width="4.45" height="4.45" fill="rgb(237, 238, 237)"/><rect x="44.0" y="4.4" width="4.45" height="4.45" fill="rgb(193, 193, 196)"/><rect x="44.0" y="8.8" width="4.45" height="4.45" fill="rgb(204, 204, 207)"/><rect x="48.4" y="0.0" width="4.45" height="4.45" fill="rgb(236, 232, 235)"/><rect x="48.4" y="4.4" width="4.45" height="4.45" fill="rgb(174, 172, 175)"/><rect x="48.4" y="8.8" width="4.45" height="4.45" fill="rgb(172, 179, 176)"/><rect x="48.4" y="13.2" width="4.45" height="4.45" fill="rgb(222, 226, 224)"/><rect x="52.8" y="0.0" width="4.45" height="4.45" fill="rgb(221, 216, 222)"/><rect x="52.8" y="4.4" width="4.45" height="4.45" fill="rgb(192, 188, 195)"/><rect x="52.8" y="8.8" width="4.45" height="4.45" fill="rgb(201, 201, 204)"/><rect x="52.8" y="13.2" width="4.45" height="4.45" fill="rgb(219, 219, 222)"/><rect x="57.2" y="4.4" width="4.45" height="4.45" fill="rgb(193, 190, 191)"/><rect x="57.2" y="8.8" width="4.45" height="4.45" fill="rgb(192, 192, 195)"/></svg>
<div class="em" style="left:919px;top:548.3px;-webkit-text-stroke:0.25px #1e1e1e">As</div>
<svg class="a" style="left:936px;top:545.50px" width="66" height="17.6"><rect x="0.0" y="4.4" width="4.45" height="4.45" fill="rgb(203, 203, 206)"/><rect x="0.0" y="8.8" width="4.45" height="4.45" fill="rgb(203, 203, 206)"/><rect x="0.0" y="13.2" width="4.45" height="4.45" fill="rgb(238, 238, 238)"/><rect x="4.4" y="4.4" width="4.45" height="4.45" fill="rgb(213, 213, 216)"/><rect x="4.4" y="8.8" width="4.45" height="4.45" fill="rgb(201, 201, 204)"/><rect x="4.4" y="13.2" width="4.45" height="4.45" fill="rgb(229, 234, 235)"/><rect x="8.8" y="4.4" width="4.45" height="4.45" fill="rgb(193, 193, 197)"/><rect x="8.8" y="8.8" width="4.45" height="4.45" fill="rgb(210, 210, 212)"/><rect x="8.8" y="13.2" width="4.45" height="4.45" fill="rgb(224, 223, 230)"/><rect x="13.2" y="4.4" width="4.45" height="4.45" fill="rgb(201, 201, 204)"/><rect x="13.2" y="8.8" width="4.45" height="4.45" fill="rgb(174, 170, 178)"/><rect x="17.6" y="0.0" width="4.45" height="4.45" fill="rgb(217, 219, 225)"/><rect x="17.6" y="4.4" width="4.45" height="4.45" fill="rgb(204, 204, 207)"/><rect x="17.6" y="8.8" width="4.45" height="4.45" fill="rgb(150, 154, 153)"/><rect x="17.6" y="13.2" width="4.45" height="4.45" fill="rgb(224, 223, 230)"/><rect x="22.0" y="0.0" width="4.45" height="4.45" fill="rgb(237, 237, 240)"/><rect x="22.0" y="4.4" width="4.45" height="4.45" fill="rgb(174, 173, 174)"/><rect x="22.0" y="8.8" width="4.45" height="4.45" fill="rgb(151, 150, 154)"/><rect x="26.4" y="4.4" width="4.45" height="4.45" fill="rgb(212, 212, 215)"/><rect x="26.4" y="8.8" width="4.45" height="4.45" fill="rgb(204, 204, 207)"/><rect x="30.8" y="4.4" width="4.45" height="4.45" fill="rgb(205, 205, 208)"/><rect x="30.8" y="8.8" width="4.45" height="4.45" fill="rgb(189, 192, 199)"/><rect x="30.8" y="13.2" width="4.45" height="4.45" fill="rgb(233, 232, 235)"/><rect x="40.0" y="4.4" width="4.45" height="4.45" fill="rgb(212, 212, 215)"/><rect x="40.0" y="8.8" width="4.45" height="4.45" fill="rgb(198, 198, 201)"/><rect x="40.0" y="13.2" width="4.45" height="4.45" fill="rgb(218, 222, 221)"/><rect x="44.4" y="4.4" width="4.45" height="4.45" fill="rgb(185, 188, 193)"/><rect x="44.4" y="8.8" width="4.45" height="4.45" fill="rgb(200, 200, 207)"/><rect x="44.4" y="13.2" width="4.45" height="4.45" fill="rgb(242, 242, 239)"/><rect x="48.8" y="0.0" width="4.45" height="4.45" fill="rgb(222, 218, 224)"/><rect x="48.8" y="4.4" width="4.45" height="4.45" fill="rgb(221, 221, 223)"/><rect x="48.8" y="8.8" width="4.45" height="4.45" fill="rgb(191, 191, 194)"/><rect x="48.8" y="13.2" width="4.45" height="4.45" fill="rgb(241, 235, 241)"/><rect x="53.2" y="4.4" width="4.45" height="4.45" fill="rgb(216, 216, 219)"/><rect x="53.2" y="8.8" width="4.45" height="4.45" fill="rgb(218, 218, 220)"/><rect x="53.2" y="13.2" width="4.45" height="4.45" fill="rgb(221, 218, 226)"/><rect x="57.6" y="0.0" width="4.45" height="4.45" fill="rgb(226, 224, 223)"/><rect x="57.6" y="4.4" width="4.45" height="4.45" fill="rgb(207, 207, 210)"/><rect x="57.6" y="8.8" width="4.45" height="4.45" fill="rgb(202, 202, 205)"/></svg>
<div class="em" style="left:919px;top:590.9px;-webkit-text-stroke:0.25px #1e1e1e">Sel</div>
<svg class="a" style="left:936px;top:588.10px" width="97" height="17.6"><rect x="0.0" y="4.4" width="4.45" height="4.45" fill="rgb(193, 193, 196)"/><rect x="0.0" y="8.8" width="4.45" height="4.45" fill="rgb(196, 196, 199)"/><rect x="0.0" y="13.2" width="4.45" height="4.45" fill="rgb(225, 223, 229)"/><rect x="4.4" y="4.4" width="4.45" height="4.45" fill="rgb(166, 161, 167)"/><rect x="4.4" y="8.8" width="4.45" height="4.45" fill="rgb(190, 190, 193)"/><rect x="8.8" y="4.4" width="4.45" height="4.45" fill="rgb(189, 189, 192)"/><rect x="8.8" y="8.8" width="4.45" height="4.45" fill="rgb(204, 204, 208)"/><rect x="8.8" y="13.2" width="4.45" height="4.45" fill="rgb(228, 227, 229)"/><rect x="13.2" y="4.4" width="4.45" height="4.45" fill="rgb(158, 160, 162)"/><rect x="13.2" y="8.8" width="4.45" height="4.45" fill="rgb(188, 188, 198)"/><rect x="13.2" y="13.2" width="4.45" height="4.45" fill="rgb(221, 219, 220)"/><rect x="17.6" y="4.4" width="4.45" height="4.45" fill="rgb(198, 200, 198)"/><rect x="17.6" y="8.8" width="4.45" height="4.45" fill="rgb(211, 211, 214)"/><rect x="22.0" y="0.0" width="4.45" height="4.45" fill="rgb(223, 223, 225)"/><rect x="22.0" y="4.4" width="4.45" height="4.45" fill="rgb(152, 156, 153)"/><rect x="22.0" y="8.8" width="4.45" height="4.45" fill="rgb(206, 206, 208)"/><rect x="22.0" y="13.2" width="4.45" height="4.45" fill="rgb(229, 227, 230)"/><rect x="26.4" y="4.4" width="4.45" height="4.45" fill="rgb(206, 206, 210)"/><rect x="26.4" y="8.8" width="4.45" height="4.45" fill="rgb(148, 153, 158)"/><rect x="26.4" y="13.2" width="4.45" height="4.45" fill="rgb(224, 222, 223)"/><rect x="30.8" y="4.4" width="4.45" height="4.45" fill="rgb(185, 185, 188)"/><rect x="30.8" y="8.8" width="4.45" height="4.45" fill="rgb(202, 202, 205)"/><rect x="35.2" y="0.0" width="4.45" height="4.45" fill="rgb(221, 219, 219)"/><rect x="35.2" y="4.4" width="4.45" height="4.45" fill="rgb(212, 212, 215)"/><rect x="35.2" y="8.8" width="4.45" height="4.45" fill="rgb(187, 192, 191)"/><rect x="39.6" y="4.4" width="4.45" height="4.45" fill="rgb(207, 207, 210)"/><rect x="39.6" y="8.8" width="4.45" height="4.45" fill="rgb(157, 159, 166)"/><rect x="44.0" y="4.4" width="4.45" height="4.45" fill="rgb(212, 212, 215)"/><rect x="44.0" y="8.8" width="4.45" height="4.45" fill="rgb(197, 197, 199)"/><rect x="48.4" y="4.4" width="4.45" height="4.45" fill="rgb(154, 159, 163)"/><rect x="48.4" y="8.8" width="4.45" height="4.45" fill="rgb(195, 195, 199)"/><rect x="48.4" y="13.2" width="4.45" height="4.45" fill="rgb(233, 233, 233)"/><rect x="52.8" y="4.4" width="4.45" height="4.45" fill="rgb(205, 205, 208)"/><rect x="52.8" y="8.8" width="4.45" height="4.45" fill="rgb(180, 182, 185)"/><rect x="57.2" y="4.4" width="4.45" height="4.45" fill="rgb(213, 213, 216)"/><rect x="57.2" y="8.8" width="4.45" height="4.45" fill="rgb(179, 179, 184)"/><rect x="57.2" y="13.2" width="4.45" height="4.45" fill="rgb(235, 233, 233)"/><rect x="61.6" y="4.4" width="4.45" height="4.45" fill="rgb(197, 198, 197)"/><rect x="61.6" y="8.8" width="4.45" height="4.45" fill="rgb(160, 162, 165)"/><rect x="61.6" y="13.2" width="4.45" height="4.45" fill="rgb(221, 216, 222)"/><rect x="66.0" y="4.4" width="4.45" height="4.45" fill="rgb(188, 188, 191)"/><rect x="66.0" y="8.8" width="4.45" height="4.45" fill="rgb(200, 200, 203)"/><rect x="66.0" y="13.2" width="4.45" height="4.45" fill="rgb(231, 228, 235)"/><rect x="76.0" y="4.4" width="4.45" height="4.45" fill="rgb(198, 198, 201)"/><rect x="76.0" y="8.8" width="4.45" height="4.45" fill="rgb(183, 182, 184)"/><rect x="76.0" y="13.2" width="4.45" height="4.45" fill="rgb(223, 220, 222)"/><rect x="80.4" y="0.0" width="4.45" height="4.45" fill="rgb(226, 222, 223)"/><rect x="80.4" y="4.4" width="4.45" height="4.45" fill="rgb(211, 211, 214)"/><rect x="80.4" y="8.8" width="4.45" height="4.45" fill="rgb(193, 193, 196)"/><rect x="80.4" y="13.2" width="4.45" height="4.45" fill="rgb(232, 232, 238)"/><rect x="84.8" y="4.4" width="4.45" height="4.45" fill="rgb(204, 204, 207)"/><rect x="84.8" y="8.8" width="4.45" height="4.45" fill="rgb(201, 201, 204)"/><rect x="89.2" y="4.4" width="4.45" height="4.45" fill="rgb(208, 208, 211)"/><rect x="89.2" y="8.8" width="4.45" height="4.45" fill="rgb(149, 150, 156)"/></svg>
<div class="em" style="left:919px;top:612.2px;-webkit-text-stroke:0.25px #1e1e1e">Cha</div>
<svg class="a" style="left:936px;top:609.40px" width="235" height="17.6"><rect x="0.0" y="4.4" width="4.45" height="4.45" fill="rgb(197, 197, 200)"/><rect x="0.0" y="8.8" width="4.45" height="4.45" fill="rgb(160, 168, 168)"/><rect x="4.4" y="4.4" width="4.45" height="4.45" fill="rgb(200, 200, 203)"/><rect x="4.4" y="8.8" width="4.45" height="4.45" fill="rgb(203, 203, 206)"/><rect x="8.8" y="4.4" width="4.45" height="4.45" fill="rgb(175, 175, 182)"/><rect x="8.8" y="8.8" width="4.45" height="4.45" fill="rgb(204, 204, 207)"/><rect x="8.8" y="13.2" width="4.45" height="4.45" fill="rgb(219, 222, 220)"/><rect x="13.2" y="0.0" width="4.45" height="4.45" fill="rgb(223, 219, 226)"/><rect x="13.2" y="4.4" width="4.45" height="4.45" fill="rgb(207, 207, 210)"/><rect x="13.2" y="8.8" width="4.45" height="4.45" fill="rgb(203, 201, 206)"/><rect x="17.6" y="0.0" width="4.45" height="4.45" fill="rgb(239, 236, 239)"/><rect x="17.6" y="4.4" width="4.45" height="4.45" fill="rgb(187, 187, 190)"/><rect x="17.6" y="8.8" width="4.45" height="4.45" fill="rgb(203, 203, 206)"/><rect x="17.6" y="13.2" width="4.45" height="4.45" fill="rgb(229, 232, 229)"/><rect x="22.0" y="4.4" width="4.45" height="4.45" fill="rgb(194, 194, 197)"/><rect x="22.0" y="8.8" width="4.45" height="4.45" fill="rgb(195, 195, 199)"/><rect x="26.4" y="0.0" width="4.45" height="4.45" fill="rgb(235, 235, 237)"/><rect x="26.4" y="4.4" width="4.45" height="4.45" fill="rgb(210, 210, 212)"/><rect x="26.4" y="8.8" width="4.45" height="4.45" fill="rgb(207, 207, 210)"/><rect x="26.4" y="13.2" width="4.45" height="4.45" fill="rgb(232, 234, 236)"/><rect x="30.8" y="0.0" width="4.45" height="4.45" fill="rgb(233, 235, 236)"/><rect x="30.8" y="4.4" width="4.45" height="4.45" fill="rgb(191, 191, 194)"/><rect x="30.8" y="8.8" width="4.45" height="4.45" fill="rgb(218, 218, 221)"/><rect x="35.2" y="0.0" width="4.45" height="4.45" fill="rgb(231, 232, 236)"/><rect x="35.2" y="4.4" width="4.45" height="4.45" fill="rgb(201, 194, 202)"/><rect x="35.2" y="8.8" width="4.45" height="4.45" fill="rgb(217, 217, 220)"/><rect x="39.6" y="4.4" width="4.45" height="4.45" fill="rgb(193, 196, 194)"/><rect x="39.6" y="8.8" width="4.45" height="4.45" fill="rgb(203, 203, 206)"/><rect x="44.0" y="0.0" width="4.45" height="4.45" fill="rgb(224, 221, 226)"/><rect x="44.0" y="4.4" width="4.45" height="4.45" fill="rgb(179, 181, 184)"/><rect x="44.0" y="8.8" width="4.45" height="4.45" fill="rgb(203, 196, 207)"/><rect x="44.0" y="13.2" width="4.45" height="4.45" fill="rgb(242, 241, 242)"/><rect x="48.4" y="4.4" width="4.45" height="4.45" fill="rgb(156, 159, 160)"/><rect x="48.4" y="8.8" width="4.45" height="4.45" fill="rgb(166, 166, 168)"/><rect x="52.8" y="0.0" width="4.45" height="4.45" fill="rgb(228, 231, 234)"/><rect x="52.8" y="4.4" width="4.45" height="4.45" fill="rgb(199, 199, 202)"/><rect x="52.8" y="8.8" width="4.45" height="4.45" fill="rgb(187, 188, 190)"/><rect x="52.8" y="13.2" width="4.45" height="4.45" fill="rgb(222, 222, 222)"/><rect x="57.2" y="4.4" width="4.45" height="4.45" fill="rgb(168, 165, 169)"/><rect x="57.2" y="8.8" width="4.45" height="4.45" fill="rgb(200, 193, 197)"/><rect x="61.6" y="4.4" width="4.45" height="4.45" fill="rgb(146, 146, 155)"/><rect x="61.6" y="8.8" width="4.45" height="4.45" fill="rgb(168, 170, 173)"/><rect x="61.6" y="13.2" width="4.45" height="4.45" fill="rgb(236, 232, 235)"/><rect x="66.0" y="0.0" width="4.45" height="4.45" fill="rgb(227, 229, 229)"/><rect x="66.0" y="4.4" width="4.45" height="4.45" fill="rgb(203, 205, 207)"/><rect x="66.0" y="8.8" width="4.45" height="4.45" fill="rgb(172, 171, 176)"/><rect x="70.4" y="4.4" width="4.45" height="4.45" fill="rgb(192, 195, 196)"/><rect x="70.4" y="8.8" width="4.45" height="4.45" fill="rgb(172, 169, 177)"/><rect x="74.8" y="4.4" width="4.45" height="4.45" fill="rgb(179, 177, 182)"/><rect x="74.8" y="8.8" width="4.45" height="4.45" fill="rgb(168, 174, 173)"/><rect x="79.2" y="4.4" width="4.45" height="4.45" fill="rgb(178, 172, 180)"/><rect x="79.2" y="8.8" width="4.45" height="4.45" fill="rgb(149, 149, 154)"/><rect x="83.6" y="0.0" width="4.45" height="4.45" fill="rgb(219, 225, 223)"/><rect x="83.6" y="4.4" width="4.45" height="4.45" fill="rgb(192, 196, 197)"/><rect x="83.6" y="8.8" width="4.45" height="4.45" fill="rgb(204, 204, 207)"/><rect x="88.0" y="0.0" width="4.45" height="4.45" fill="rgb(228, 225, 228)"/><rect x="88.0" y="4.4" width="4.45" height="4.45" fill="rgb(200, 200, 206)"/><rect x="88.0" y="8.8" width="4.45" height="4.45" fill="rgb(171, 171, 173)"/><rect x="88.0" y="13.2" width="4.45" height="4.45" fill="rgb(221, 221, 223)"/><rect x="92.4" y="0.0" width="4.45" height="4.45" fill="rgb(234, 229, 232)"/><rect x="92.4" y="4.4" width="4.45" height="4.45" fill="rgb(151, 151, 152)"/><rect x="92.4" y="8.8" width="4.45" height="4.45" fill="rgb(193, 199, 202)"/><rect x="92.4" y="13.2" width="4.45" height="4.45" fill="rgb(242, 239, 241)"/><rect x="96.8" y="4.4" width="4.45" height="4.45" fill="rgb(183, 184, 185)"/><rect x="96.8" y="8.8" width="4.45" height="4.45" fill="rgb(163, 157, 164)"/><rect x="101.2" y="4.4" width="4.45" height="4.45" fill="rgb(203, 203, 206)"/><rect x="101.2" y="8.8" width="4.45" height="4.45" fill="rgb(196, 199, 202)"/><rect x="105.6" y="4.4" width="4.45" height="4.45" fill="rgb(149, 151, 152)"/><rect x="105.6" y="8.8" width="4.45" height="4.45" fill="rgb(154, 155, 159)"/><rect x="110.0" y="0.0" width="4.45" height="4.45" fill="rgb(227, 225, 227)"/><rect x="110.0" y="4.4" width="4.45" height="4.45" fill="rgb(203, 203, 207)"/><rect x="110.0" y="8.8" width="4.45" height="4.45" fill="rgb(181, 184, 188)"/><rect x="114.4" y="0.0" width="4.45" height="4.45" fill="rgb(233, 233, 237)"/><rect x="114.4" y="4.4" width="4.45" height="4.45" fill="rgb(202, 195, 203)"/><rect x="114.4" y="8.8" width="4.45" height="4.45" fill="rgb(212, 212, 215)"/><rect x="118.8" y="4.4" width="4.45" height="4.45" fill="rgb(148, 155, 154)"/><rect x="118.8" y="8.8" width="4.45" height="4.45" fill="rgb(192, 192, 195)"/><rect x="123.2" y="4.4" width="4.45" height="4.45" fill="rgb(196, 196, 199)"/><rect x="123.2" y="8.8" width="4.45" height="4.45" fill="rgb(209, 209, 212)"/><rect x="123.2" y="13.2" width="4.45" height="4.45" fill="rgb(237, 237, 236)"/><rect x="127.6" y="0.0" width="4.45" height="4.45" fill="rgb(237, 237, 237)"/><rect x="127.6" y="4.4" width="4.45" height="4.45" fill="rgb(201, 201, 204)"/><rect x="127.6" y="8.8" width="4.45" height="4.45" fill="rgb(158, 158, 166)"/><rect x="127.6" y="13.2" width="4.45" height="4.45" fill="rgb(230, 227, 228)"/><rect x="132.0" y="0.0" width="4.45" height="4.45" fill="rgb(230, 235, 235)"/><rect x="132.0" y="4.4" width="4.45" height="4.45" fill="rgb(210, 210, 213)"/><rect x="132.0" y="8.8" width="4.45" height="4.45" fill="rgb(191, 191, 194)"/><rect x="132.0" y="13.2" width="4.45" height="4.45" fill="rgb(234, 235, 237)"/><rect x="136.4" y="4.4" width="4.45" height="4.45" fill="rgb(172, 173, 174)"/><rect x="136.4" y="8.8" width="4.45" height="4.45" fill="rgb(173, 176, 176)"/><rect x="140.8" y="0.0" width="4.45" height="4.45" fill="rgb(222, 216, 224)"/><rect x="140.8" y="4.4" width="4.45" height="4.45" fill="rgb(200, 200, 203)"/><rect x="140.8" y="8.8" width="4.45" height="4.45" fill="rgb(166, 167, 171)"/><rect x="145.2" y="4.4" width="4.45" height="4.45" fill="rgb(188, 185, 192)"/><rect x="145.2" y="8.8" width="4.45" height="4.45" fill="rgb(163, 162, 162)"/><rect x="149.6" y="0.0" width="4.45" height="4.45" fill="rgb(240, 239, 241)"/><rect x="149.6" y="4.4" width="4.45" height="4.45" fill="rgb(190, 190, 193)"/><rect x="149.6" y="8.8" width="4.45" height="4.45" fill="rgb(192, 192, 195)"/><rect x="154.0" y="0.0" width="4.45" height="4.45" fill="rgb(220, 216, 222)"/><rect x="154.0" y="4.4" width="4.45" height="4.45" fill="rgb(165, 169, 172)"/><rect x="154.0" y="8.8" width="4.45" height="4.45" fill="rgb(184, 192, 188)"/><rect x="158.4" y="4.4" width="4.45" height="4.45" fill="rgb(180, 182, 189)"/><rect x="158.4" y="8.8" width="4.45" height="4.45" fill="rgb(212, 212, 215)"/><rect x="162.8" y="4.4" width="4.45" height="4.45" fill="rgb(189, 189, 192)"/><rect x="162.8" y="8.8" width="4.45" height="4.45" fill="rgb(192, 192, 195)"/><rect x="167.2" y="4.4" width="4.45" height="4.45" fill="rgb(201, 201, 204)"/><rect x="167.2" y="8.8" width="4.45" height="4.45" fill="rgb(202, 202, 205)"/><rect x="171.6" y="4.4" width="4.45" height="4.45" fill="rgb(160, 163, 162)"/><rect x="171.6" y="8.8" width="4.45" height="4.45" fill="rgb(194, 187, 198)"/><rect x="176.0" y="4.4" width="4.45" height="4.45" fill="rgb(196, 195, 195)"/><rect x="176.0" y="8.8" width="4.45" height="4.45" fill="rgb(156, 162, 162)"/><rect x="180.4" y="0.0" width="4.45" height="4.45" fill="rgb(236, 233, 238)"/><rect x="180.4" y="4.4" width="4.45" height="4.45" fill="rgb(183, 179, 182)"/><rect x="180.4" y="8.8" width="4.45" height="4.45" fill="rgb(209, 209, 212)"/><rect x="184.8" y="0.0" width="4.45" height="4.45" fill="rgb(237, 233, 238)"/><rect x="184.8" y="4.4" width="4.45" height="4.45" fill="rgb(192, 192, 195)"/><rect x="184.8" y="8.8" width="4.45" height="4.45" fill="rgb(216, 216, 219)"/><rect x="189.2" y="4.4" width="4.45" height="4.45" fill="rgb(197, 197, 200)"/><rect x="189.2" y="8.8" width="4.45" height="4.45" fill="rgb(168, 169, 175)"/><rect x="189.2" y="13.2" width="4.45" height="4.45" fill="rgb(235, 231, 237)"/><rect x="193.6" y="4.4" width="4.45" height="4.45" fill="rgb(163, 166, 168)"/><rect x="193.6" y="8.8" width="4.45" height="4.45" fill="rgb(202, 202, 205)"/><rect x="198.0" y="0.0" width="4.45" height="4.45" fill="rgb(225, 227, 228)"/><rect x="198.0" y="4.4" width="4.45" height="4.45" fill="rgb(167, 164, 173)"/><rect x="198.0" y="8.8" width="4.45" height="4.45" fill="rgb(215, 215, 218)"/><rect x="202.4" y="4.4" width="4.45" height="4.45" fill="rgb(186, 187, 190)"/><rect x="202.4" y="8.8" width="4.45" height="4.45" fill="rgb(155, 150, 158)"/><rect x="206.8" y="4.4" width="4.45" height="4.45" fill="rgb(207, 207, 210)"/><rect x="206.8" y="8.8" width="4.45" height="4.45" fill="rgb(169, 168, 177)"/><rect x="211.2" y="4.4" width="4.45" height="4.45" fill="rgb(200, 200, 203)"/><rect x="211.2" y="8.8" width="4.45" height="4.45" fill="rgb(156, 158, 165)"/><rect x="215.6" y="4.4" width="4.45" height="4.45" fill="rgb(190, 190, 193)"/><rect x="215.6" y="8.8" width="4.45" height="4.45" fill="rgb(204, 204, 207)"/><rect x="220.0" y="0.0" width="4.45" height="4.45" fill="rgb(218, 217, 218)"/><rect x="220.0" y="4.4" width="4.45" height="4.45" fill="rgb(195, 195, 198)"/><rect x="220.0" y="8.8" width="4.45" height="4.45" fill="rgb(177, 178, 174)"/><rect x="224.4" y="4.4" width="4.45" height="4.45" fill="rgb(174, 177, 180)"/><rect x="224.4" y="8.8" width="4.45" height="4.45" fill="rgb(204, 200, 205)"/><rect x="224.4" y="13.2" width="4.45" height="4.45" fill="rgb(227, 230, 234)"/><rect x="228.8" y="0.0" width="4.45" height="4.45" fill="rgb(232, 234, 232)"/><rect x="228.8" y="4.4" width="4.45" height="4.45" fill="rgb(189, 189, 192)"/><rect x="228.8" y="8.8" width="4.45" height="4.45" fill="rgb(203, 197, 202)"/></svg>
<div class="em" style="left:919px;top:633.5px;-webkit-text-stroke:0.25px #1e1e1e">Tec</div>
<svg class="a" style="left:936px;top:630.70px" width="164" height="17.6"><rect x="0.0" y="0.0" width="4.45" height="4.45" fill="rgb(220, 220, 218)"/><rect x="0.0" y="4.4" width="4.45" height="4.45" fill="rgb(194, 194, 197)"/><rect x="0.0" y="8.8" width="4.45" height="4.45" fill="rgb(167, 166, 173)"/><rect x="0.0" y="13.2" width="4.45" height="4.45" fill="rgb(220, 219, 224)"/><rect x="4.4" y="4.4" width="4.45" height="4.45" fill="rgb(198, 195, 202)"/><rect x="4.4" y="8.8" width="4.45" height="4.45" fill="rgb(183, 179, 188)"/><rect x="4.4" y="13.2" width="4.45" height="4.45" fill="rgb(234, 233, 233)"/><rect x="8.8" y="4.4" width="4.45" height="4.45" fill="rgb(192, 192, 196)"/><rect x="8.8" y="8.8" width="4.45" height="4.45" fill="rgb(177, 178, 185)"/><rect x="13.2" y="4.4" width="4.45" height="4.45" fill="rgb(200, 200, 203)"/><rect x="13.2" y="8.8" width="4.45" height="4.45" fill="rgb(183, 184, 184)"/><rect x="17.6" y="4.4" width="4.45" height="4.45" fill="rgb(210, 210, 213)"/><rect x="17.6" y="8.8" width="4.45" height="4.45" fill="rgb(151, 153, 158)"/><rect x="22.0" y="4.4" width="4.45" height="4.45" fill="rgb(206, 206, 209)"/><rect x="22.0" y="8.8" width="4.45" height="4.45" fill="rgb(211, 211, 214)"/><rect x="26.4" y="0.0" width="4.45" height="4.45" fill="rgb(241, 238, 239)"/><rect x="26.4" y="4.4" width="4.45" height="4.45" fill="rgb(199, 199, 202)"/><rect x="26.4" y="8.8" width="4.45" height="4.45" fill="rgb(198, 198, 202)"/><rect x="26.4" y="13.2" width="4.45" height="4.45" fill="rgb(228, 227, 225)"/><rect x="30.8" y="0.0" width="4.45" height="4.45" fill="rgb(234, 229, 234)"/><rect x="30.8" y="4.4" width="4.45" height="4.45" fill="rgb(205, 205, 208)"/><rect x="30.8" y="8.8" width="4.45" height="4.45" fill="rgb(167, 166, 172)"/><rect x="35.2" y="0.0" width="4.45" height="4.45" fill="rgb(219, 220, 224)"/><rect x="35.2" y="4.4" width="4.45" height="4.45" fill="rgb(202, 202, 205)"/><rect x="35.2" y="8.8" width="4.45" height="4.45" fill="rgb(160, 155, 158)"/><rect x="35.2" y="13.2" width="4.45" height="4.45" fill="rgb(230, 231, 231)"/><rect x="39.6" y="4.4" width="4.45" height="4.45" fill="rgb(170, 167, 177)"/><rect x="39.6" y="8.8" width="4.45" height="4.45" fill="rgb(204, 204, 208)"/><rect x="44.0" y="0.0" width="4.45" height="4.45" fill="rgb(234, 234, 237)"/><rect x="44.0" y="4.4" width="4.45" height="4.45" fill="rgb(195, 195, 198)"/><rect x="44.0" y="8.8" width="4.45" height="4.45" fill="rgb(146, 153, 153)"/><rect x="48.4" y="4.4" width="4.45" height="4.45" fill="rgb(199, 199, 202)"/><rect x="48.4" y="8.8" width="4.45" height="4.45" fill="rgb(177, 177, 189)"/><rect x="52.8" y="0.0" width="4.45" height="4.45" fill="rgb(230, 231, 233)"/><rect x="52.8" y="4.4" width="4.45" height="4.45" fill="rgb(157, 153, 160)"/><rect x="52.8" y="8.8" width="4.45" height="4.45" fill="rgb(212, 212, 214)"/><rect x="52.8" y="13.2" width="4.45" height="4.45" fill="rgb(231, 229, 231)"/><rect x="57.2" y="0.0" width="4.45" height="4.45" fill="rgb(223, 218, 225)"/><rect x="57.2" y="4.4" width="4.45" height="4.45" fill="rgb(213, 213, 215)"/><rect x="57.2" y="8.8" width="4.45" height="4.45" fill="rgb(196, 196, 199)"/><rect x="61.6" y="4.4" width="4.45" height="4.45" fill="rgb(191, 191, 194)"/><rect x="61.6" y="8.8" width="4.45" height="4.45" fill="rgb(207, 202, 204)"/><rect x="66.0" y="4.4" width="4.45" height="4.45" fill="rgb(159, 162, 164)"/><rect x="66.0" y="8.8" width="4.45" height="4.45" fill="rgb(209, 209, 212)"/><rect x="70.4" y="0.0" width="4.45" height="4.45" fill="rgb(227, 226, 230)"/><rect x="70.4" y="4.4" width="4.45" height="4.45" fill="rgb(206, 206, 209)"/><rect x="70.4" y="8.8" width="4.45" height="4.45" fill="rgb(159, 154, 164)"/><rect x="74.8" y="4.4" width="4.45" height="4.45" fill="rgb(215, 215, 217)"/><rect x="74.8" y="8.8" width="4.45" height="4.45" fill="rgb(176, 178, 179)"/><rect x="79.2" y="0.0" width="4.45" height="4.45" fill="rgb(235, 235, 234)"/><rect x="79.2" y="4.4" width="4.45" height="4.45" fill="rgb(203, 204, 203)"/><rect x="79.2" y="8.8" width="4.45" height="4.45" fill="rgb(211, 211, 214)"/><rect x="83.6" y="4.4" width="4.45" height="4.45" fill="rgb(207, 207, 210)"/><rect x="83.6" y="8.8" width="4.45" height="4.45" fill="rgb(202, 202, 205)"/><rect x="88.0" y="0.0" width="4.45" height="4.45" fill="rgb(242, 240, 242)"/><rect x="88.0" y="4.4" width="4.45" height="4.45" fill="rgb(163, 163, 165)"/><rect x="88.0" y="8.8" width="4.45" height="4.45" fill="rgb(197, 197, 200)"/><rect x="92.4" y="4.4" width="4.45" height="4.45" fill="rgb(188, 185, 196)"/><rect x="92.4" y="8.8" width="4.45" height="4.45" fill="rgb(216, 216, 219)"/><rect x="92.4" y="13.2" width="4.45" height="4.45" fill="rgb(228, 230, 229)"/><rect x="96.8" y="4.4" width="4.45" height="4.45" fill="rgb(194, 194, 197)"/><rect x="96.8" y="8.8" width="4.45" height="4.45" fill="rgb(204, 204, 207)"/><rect x="101.2" y="0.0" width="4.45" height="4.45" fill="rgb(221, 223, 225)"/><rect x="101.2" y="4.4" width="4.45" height="4.45" fill="rgb(184, 187, 190)"/><rect x="101.2" y="8.8" width="4.45" height="4.45" fill="rgb(200, 200, 203)"/><rect x="101.2" y="13.2" width="4.45" height="4.45" fill="rgb(223, 229, 228)"/><rect x="105.6" y="4.4" width="4.45" height="4.45" fill="rgb(148, 146, 149)"/><rect x="105.6" y="8.8" width="4.45" height="4.45" fill="rgb(183, 184, 186)"/><rect x="116.0" y="4.4" width="4.45" height="4.45" fill="rgb(209, 209, 212)"/><rect x="116.0" y="8.8" width="4.45" height="4.45" fill="rgb(156, 153, 155)"/><rect x="120.4" y="4.4" width="4.45" height="4.45" fill="rgb(205, 205, 207)"/><rect x="120.4" y="8.8" width="4.45" height="4.45" fill="rgb(144, 144, 156)"/><rect x="124.8" y="0.0" width="4.45" height="4.45" fill="rgb(220, 220, 226)"/><rect x="124.8" y="4.4" width="4.45" height="4.45" fill="rgb(175, 178, 179)"/><rect x="124.8" y="8.8" width="4.45" height="4.45" fill="rgb(190, 190, 193)"/><rect x="129.2" y="4.4" width="4.45" height="4.45" fill="rgb(213, 213, 216)"/><rect x="129.2" y="8.8" width="4.45" height="4.45" fill="rgb(199, 199, 202)"/><rect x="133.6" y="4.4" width="4.45" height="4.45" fill="rgb(199, 201, 203)"/><rect x="133.6" y="8.8" width="4.45" height="4.45" fill="rgb(151, 154, 158)"/><rect x="138.0" y="4.4" width="4.45" height="4.45" fill="rgb(195, 192, 199)"/><rect x="138.0" y="8.8" width="4.45" height="4.45" fill="rgb(202, 202, 205)"/><rect x="142.4" y="4.4" width="4.45" height="4.45" fill="rgb(197, 198, 201)"/><rect x="142.4" y="8.8" width="4.45" height="4.45" fill="rgb(180, 181, 188)"/><rect x="142.4" y="13.2" width="4.45" height="4.45" fill="rgb(241, 242, 242)"/><rect x="146.8" y="4.4" width="4.45" height="4.45" fill="rgb(181, 180, 187)"/><rect x="146.8" y="8.8" width="4.45" height="4.45" fill="rgb(206, 206, 209)"/><rect x="151.2" y="4.4" width="4.45" height="4.45" fill="rgb(206, 199, 209)"/><rect x="151.2" y="8.8" width="4.45" height="4.45" fill="rgb(201, 201, 204)"/><rect x="155.6" y="4.4" width="4.45" height="4.45" fill="rgb(156, 150, 153)"/><rect x="155.6" y="8.8" width="4.45" height="4.45" fill="rgb(207, 207, 210)"/><rect x="155.6" y="13.2" width="4.45" height="4.45" fill="rgb(224, 227, 229)"/></svg>
<div class="em" style="left:919px;top:677px;font-size:12.5px;color:#333;letter-spacing:1.2px">==============================</div>
<div class="a" style="left:1397px;top:412px;width:5px;height:128px;background:#5f5f5f;border-radius:3px"></div>
<div class="a" style="left:0;top:0;width:1425px;height:714px;border-left:2px solid #707070;border-top:1.5px solid #8a8a8a;border-right:2px solid #6a6a6a;border-bottom:2.5px solid #6a6a6a"></div>
<svg class="a" style="left:0;top:0" width="1425" height="714"><rect x="11.5" y="34" width="343" height="35" fill="none" stroke="#ee1111" stroke-width="2" stroke-dasharray="6,2"/><rect x="899" y="108" width="200" height="34" fill="none" stroke="#ee1111" stroke-width="2" stroke-dasharray="6,2"/></svg>
<svg class="a" style="left:875px;top:187px" width="5" height="6" viewBox="0 0 5 6"><path d="M0 0.5L4 3L0 5.5Z" fill="#555"/></svg>
<div class="a" style="left:273px;top:179px;width:603px;height:142px;background:#6f97c9;border:1.5px solid #0a0a0a"></div>
<div class="a" style="left:261px;top:155px;width:36px;height:36px;border-radius:50%;background:#79a1d1;border:1.6px solid #1f2b3c"></div>
<div class="t" style="left:261px;top:161.5px;width:36px;text-align:center;font-size:23.5px;color:#fff;transform:scaleX(0.95);-webkit-text-stroke:0.5px #fff">3</div>
<div class="t" style="left:288px;top:210px;font-size:23px;line-height:27.5px;letter-spacing:1.46px;color:#000">Matched Card List displays the total number and<br>list of matched cards.<br>You can view the details of each matched card.</div>
</body></html>
